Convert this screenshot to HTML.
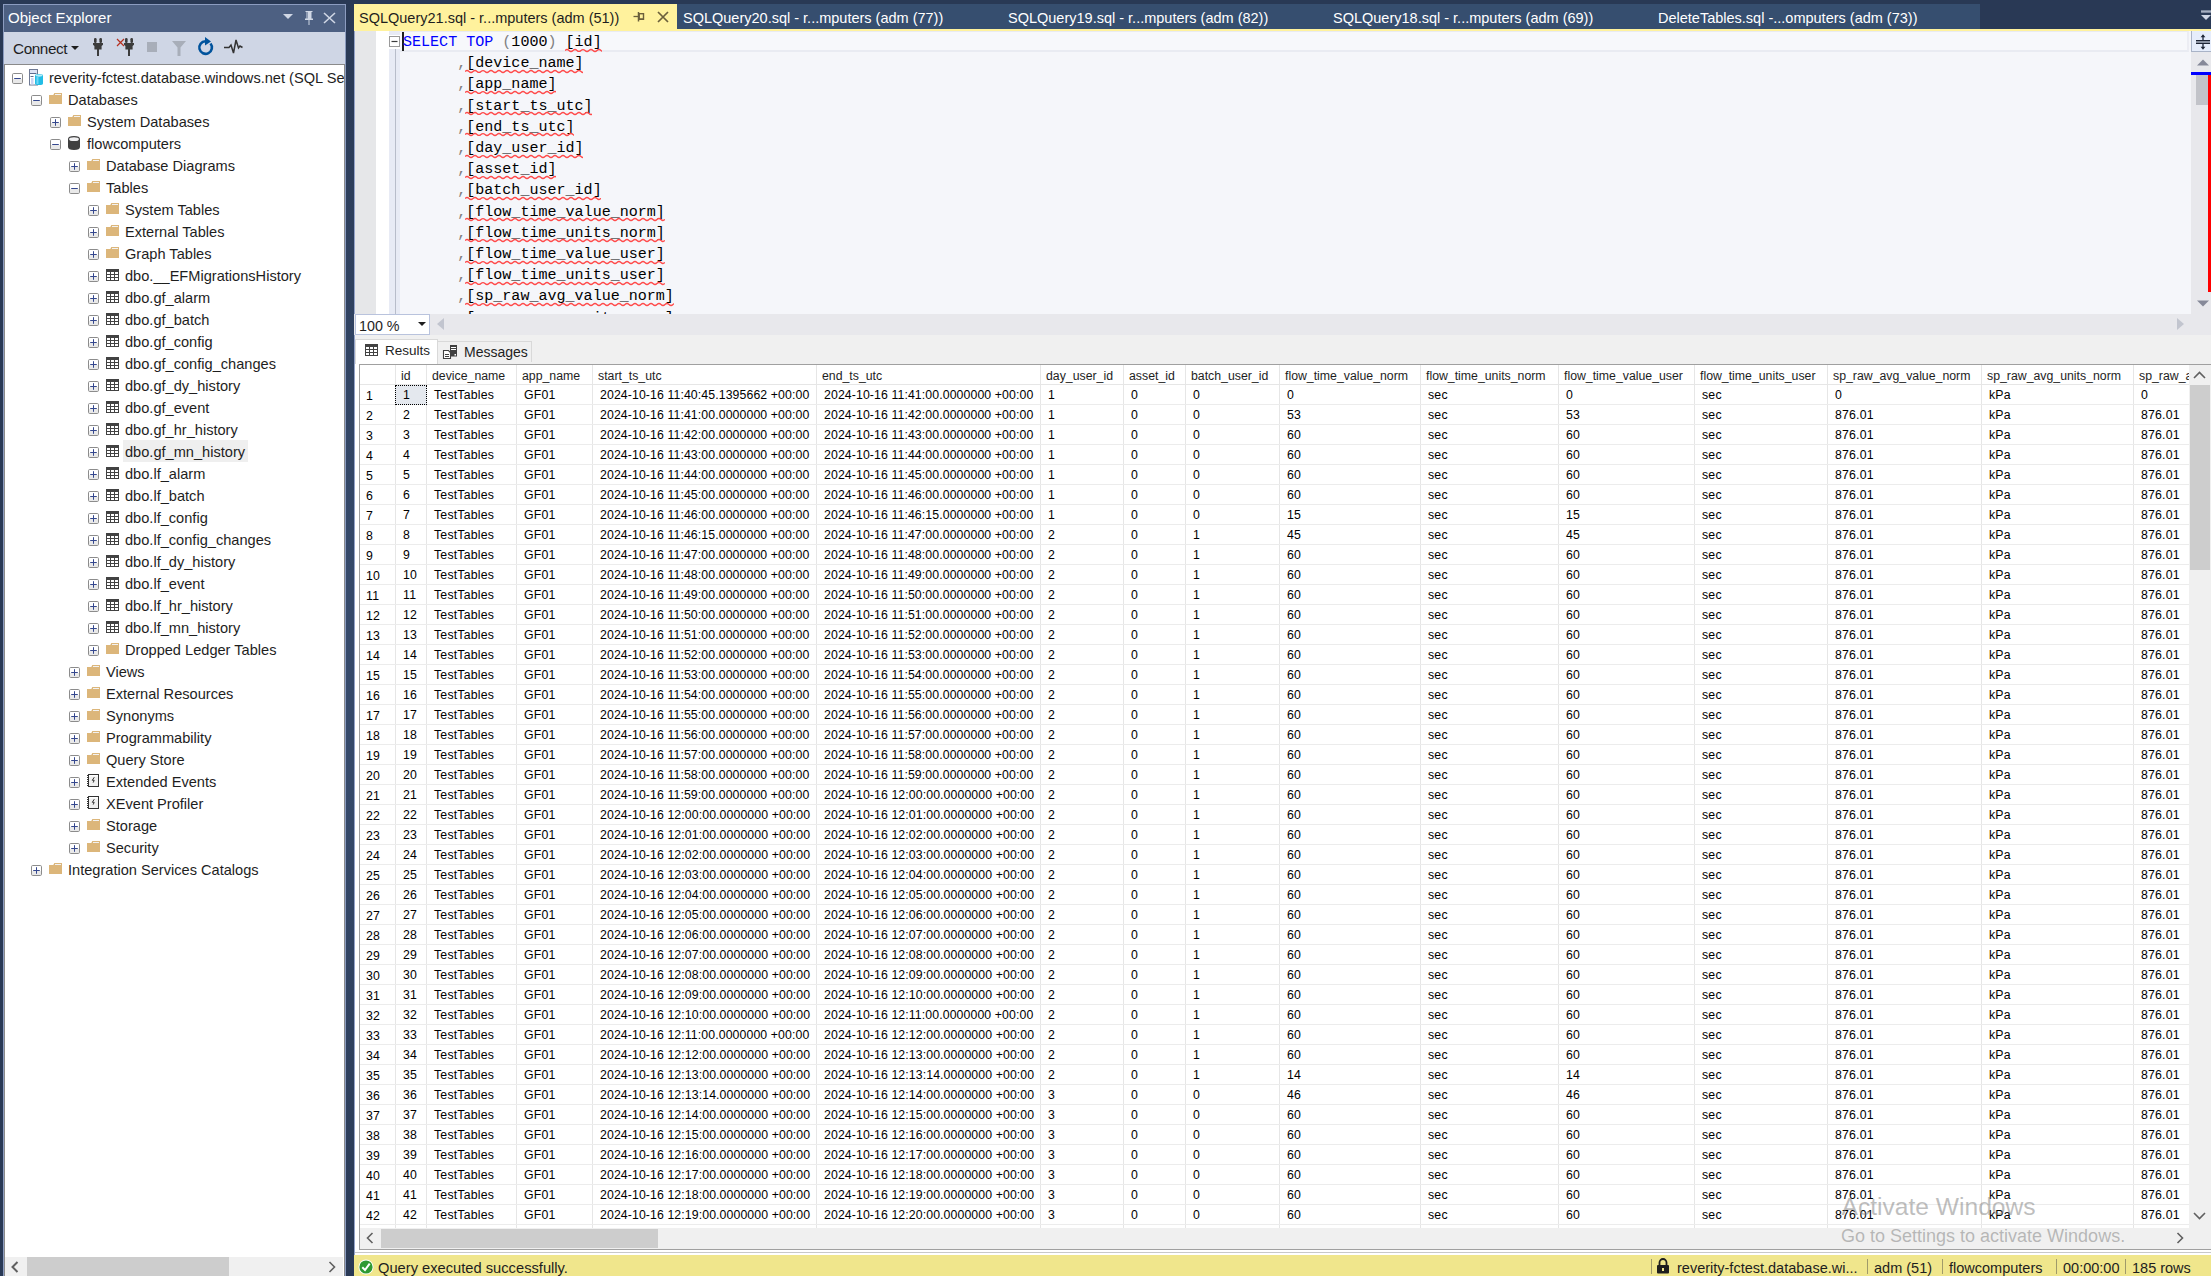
<!DOCTYPE html><html><head><meta charset="utf-8"><style>
*{margin:0;padding:0;box-sizing:border-box}
html,body{width:2211px;height:1276px;overflow:hidden}
body{background:#293955;position:relative;font-family:"Liberation Sans",sans-serif;color:#000}
.a{position:absolute}
.t{position:absolute;white-space:pre;line-height:1}
</style></head><body><div class="a" style="left:344px;top:0px;width:12px;height:1276px;background:linear-gradient(to bottom,#293955 0%,#35496a 45%,#35496a 62%,#293955 100%);"></div>
<div class="a" style="left:3px;top:4px;width:343px;height:1272px;background:#8c9cc0;"></div>
<div class="a" style="left:4px;top:5px;width:341px;height:27px;background:#4d6082;"></div>
<div class="t" style="left:8px;top:10px;font-size:15px;color:#ffffff;font-family:'Liberation Sans';">Object Explorer</div>
<svg class="a" style="left:282px;top:13px" width="12" height="8"><path d="M1 1 L11 1 L6 6 Z" fill="#d0d7e5"/></svg>
<svg class="a" style="left:303px;top:10px" width="12" height="16"><path d="M2.5 1 H9.5 V2 H8.5 V8.5 H10 V10 H6.5 V15 H5.5 V10 H2 V8.5 H3.5 V2 H2.5 Z M4.5 2 V8.5 H5 V2 Z" fill="#d0d7e5"/></svg>
<svg class="a" style="left:323px;top:12px" width="13" height="12"><path d="M1 1 L12 11 M12 1 L1 11" stroke="#d0d7e5" stroke-width="1.6"/></svg>
<div class="a" style="left:4px;top:32px;width:341px;height:32px;background:#cfd6e5;"></div>
<div class="t" style="left:13px;top:40.5px;font-size:15.3px;color:#1e1e1e;font-family:'Liberation Sans';letter-spacing:-0.4px">Connect</div>
<svg class="a" style="left:71px;top:46px" width="9" height="5"><path d="M0 0 L8 0 L4 4 Z" fill="#1e1e1e"/></svg>
<svg class="a" style="left:93px;top:38px" width="10" height="18"><rect x="1" y="0" width="2.6" height="5" rx="1.2" fill="#3c3c3c"/><rect x="6.4" y="0" width="2.6" height="5" rx="1.2" fill="#3c3c3c"/><path d="M0 5 H10 V6.8 L8.6 8 V11.5 H6 V18 H4 V11.5 H1.4 V8 L0 6.8 Z" fill="#3c3c3c"/></svg>
<svg class="a" style="left:116px;top:38px" width="9" height="9"><path d="M1 1 L8 8 M8 1 L1 8" stroke="#b5301f" stroke-width="1.2"/></svg>
<svg class="a" style="left:124px;top:38px" width="10" height="18"><rect x="1" y="0" width="2.6" height="5" rx="1.2" fill="#3c3c3c"/><rect x="6.4" y="0" width="2.6" height="5" rx="1.2" fill="#3c3c3c"/><path d="M0 5 H10 V6.8 L8.6 8 V11.5 H6 V18 H4 V11.5 H1.4 V8 L0 6.8 Z" fill="#3c3c3c"/></svg>
<div class="a" style="left:147px;top:42px;width:10px;height:10px;background:#a8aeb9;"></div>
<svg class="a" style="left:172px;top:41px" width="15" height="16"><path d="M0 0 H14 L8.5 6.5 V15 H5.5 V6.5 Z" fill="#a8aeb9"/></svg>
<svg class="a" style="left:197px;top:37px" width="18" height="20"><path d="M13.5 6.5 A6.3 6.3 0 1 1 8.5 4.2" stroke="#00539c" stroke-width="2.6" fill="none"/><path d="M8 0 L14 4.5 L8 8.5 Z" fill="#00539c"/></svg>
<svg class="a" style="left:224px;top:39px" width="19" height="16"><path d="M0 8.5 H5 L7 6 L9.5 14 L12 1 L14.5 9 L16 7 L18.5 8.5" stroke="#333" stroke-width="1.5" fill="none"/></svg>
<div class="a" style="left:4px;top:64px;width:341px;height:1212px;background:#ffffff;border:1px solid #8a8a8a;border-bottom:none"></div>
<div class="a" style="left:5px;top:1257px;width:338px;height:19px;background:#f0f0f0;"></div>
<div class="a" style="left:27px;top:1257px;width:202px;height:19px;background:#cdcdcd;"></div>
<svg class="a" style="left:11px;top:1261px" width="8" height="12"><path d="M6.5 1 L1.5 6 L6.5 11" stroke="#606060" stroke-width="2" fill="none"/></svg>
<svg class="a" style="left:328px;top:1261px" width="8" height="12"><path d="M1.5 1 L6.5 6 L1.5 11" stroke="#606060" stroke-width="1.6" fill="none"/></svg>
<div class="a" style="left:5px;top:65px;width:339px;height:1192px;overflow:hidden">
<svg class="a" style="left:7px;top:8px" width="11" height="11"><rect x="1" y="6" width="9" height="4" fill="#e9e9e9"/><rect x="0.5" y="0.5" width="10" height="10" rx="1.2" fill="none" stroke="#8c8c8c"/><path d="M2.2 5.5 H8.8" stroke="#34478e" stroke-width="1"/></svg>
<svg class="a" style="left:24px;top:4px" width="15" height="17"><rect x="0.5" y="0.5" width="8" height="15.5" fill="#fff" stroke="#6f7a94"/><rect x="1" y="1" width="7" height="3" fill="#dfe4f5"/><path d="M1 4.5 H7.5 M1.5 7.5 H4.5" stroke="#5d6b8f" stroke-width="1.2"/><rect x="2" y="9" width="2.5" height="6.5" fill="#cdd5f2"/><path d="M6 6.5 Q6 5 10 5 Q14 5 14 6.5 V14.5 Q14 16 10 16 Q6 16 6 14.5 Z" fill="#22bde6"/><ellipse cx="10" cy="6.6" rx="3.4" ry="1.1" fill="#b5ecfa"/><rect x="7.5" y="8" width="2" height="7" fill="#6fd6f5"/></svg>
<div class="t" style="left:44px;top:6px;font-size:14.6px;color:#1e1e1e;font-family:'Liberation Sans';">reverity-fctest.database.windows.net (SQL Se</div>
<svg class="a" style="left:26px;top:30px" width="11" height="11"><rect x="1" y="6" width="9" height="4" fill="#e9e9e9"/><rect x="0.5" y="0.5" width="10" height="10" rx="1.2" fill="none" stroke="#8c8c8c"/><path d="M2.2 5.5 H8.8" stroke="#34478e" stroke-width="1"/></svg>
<svg class="a" style="left:44px;top:28px" width="14" height="11"><path d="M0 2 H4.3 L5.3 0 H13 V11 H0 Z" fill="#dcb67a"/><path d="M6 1.5 H12" stroke="#f2f2f2" stroke-width="1"/></svg>
<div class="t" style="left:63px;top:28px;font-size:14.6px;color:#1e1e1e;font-family:'Liberation Sans';">Databases</div>
<svg class="a" style="left:45px;top:52px" width="11" height="11"><rect x="1" y="6" width="9" height="4" fill="#e9e9e9"/><rect x="0.5" y="0.5" width="10" height="10" rx="1.2" fill="none" stroke="#8c8c8c"/><path d="M2.2 5.5 H8.8" stroke="#34478e" stroke-width="1"/><path d="M5.5 2.2 V8.8" stroke="#34478e" stroke-width="1"/></svg>
<svg class="a" style="left:63px;top:50px" width="14" height="11"><path d="M0 2 H4.3 L5.3 0 H13 V11 H0 Z" fill="#dcb67a"/><path d="M6 1.5 H12" stroke="#f2f2f2" stroke-width="1"/></svg>
<div class="t" style="left:82px;top:50px;font-size:14.6px;color:#1e1e1e;font-family:'Liberation Sans';">System Databases</div>
<svg class="a" style="left:45px;top:74px" width="11" height="11"><rect x="1" y="6" width="9" height="4" fill="#e9e9e9"/><rect x="0.5" y="0.5" width="10" height="10" rx="1.2" fill="none" stroke="#8c8c8c"/><path d="M2.2 5.5 H8.8" stroke="#34478e" stroke-width="1"/></svg>
<svg class="a" style="left:63px;top:71px" width="12" height="14"><path d="M0 3 Q0 0 6 0 Q12 0 12 3 V11 Q12 14 6 14 Q0 14 0 11 Z" fill="#404040"/><ellipse cx="6" cy="3.2" rx="4.9" ry="1.9" fill="#f0f0f2"/></svg>
<div class="t" style="left:82px;top:72px;font-size:14.6px;color:#1e1e1e;font-family:'Liberation Sans';">flowcomputers</div>
<svg class="a" style="left:64px;top:96px" width="11" height="11"><rect x="1" y="6" width="9" height="4" fill="#e9e9e9"/><rect x="0.5" y="0.5" width="10" height="10" rx="1.2" fill="none" stroke="#8c8c8c"/><path d="M2.2 5.5 H8.8" stroke="#34478e" stroke-width="1"/><path d="M5.5 2.2 V8.8" stroke="#34478e" stroke-width="1"/></svg>
<svg class="a" style="left:82px;top:94px" width="14" height="11"><path d="M0 2 H4.3 L5.3 0 H13 V11 H0 Z" fill="#dcb67a"/><path d="M6 1.5 H12" stroke="#f2f2f2" stroke-width="1"/></svg>
<div class="t" style="left:101px;top:94px;font-size:14.6px;color:#1e1e1e;font-family:'Liberation Sans';">Database Diagrams</div>
<svg class="a" style="left:64px;top:118px" width="11" height="11"><rect x="1" y="6" width="9" height="4" fill="#e9e9e9"/><rect x="0.5" y="0.5" width="10" height="10" rx="1.2" fill="none" stroke="#8c8c8c"/><path d="M2.2 5.5 H8.8" stroke="#34478e" stroke-width="1"/></svg>
<svg class="a" style="left:82px;top:116px" width="14" height="11"><path d="M0 2 H4.3 L5.3 0 H13 V11 H0 Z" fill="#dcb67a"/><path d="M6 1.5 H12" stroke="#f2f2f2" stroke-width="1"/></svg>
<div class="t" style="left:101px;top:116px;font-size:14.6px;color:#1e1e1e;font-family:'Liberation Sans';">Tables</div>
<svg class="a" style="left:83px;top:140px" width="11" height="11"><rect x="1" y="6" width="9" height="4" fill="#e9e9e9"/><rect x="0.5" y="0.5" width="10" height="10" rx="1.2" fill="none" stroke="#8c8c8c"/><path d="M2.2 5.5 H8.8" stroke="#34478e" stroke-width="1"/><path d="M5.5 2.2 V8.8" stroke="#34478e" stroke-width="1"/></svg>
<svg class="a" style="left:101px;top:138px" width="14" height="11"><path d="M0 2 H4.3 L5.3 0 H13 V11 H0 Z" fill="#dcb67a"/><path d="M6 1.5 H12" stroke="#f2f2f2" stroke-width="1"/></svg>
<div class="t" style="left:120px;top:138px;font-size:14.6px;color:#1e1e1e;font-family:'Liberation Sans';">System Tables</div>
<svg class="a" style="left:83px;top:162px" width="11" height="11"><rect x="1" y="6" width="9" height="4" fill="#e9e9e9"/><rect x="0.5" y="0.5" width="10" height="10" rx="1.2" fill="none" stroke="#8c8c8c"/><path d="M2.2 5.5 H8.8" stroke="#34478e" stroke-width="1"/><path d="M5.5 2.2 V8.8" stroke="#34478e" stroke-width="1"/></svg>
<svg class="a" style="left:101px;top:160px" width="14" height="11"><path d="M0 2 H4.3 L5.3 0 H13 V11 H0 Z" fill="#dcb67a"/><path d="M6 1.5 H12" stroke="#f2f2f2" stroke-width="1"/></svg>
<div class="t" style="left:120px;top:160px;font-size:14.6px;color:#1e1e1e;font-family:'Liberation Sans';">External Tables</div>
<svg class="a" style="left:83px;top:184px" width="11" height="11"><rect x="1" y="6" width="9" height="4" fill="#e9e9e9"/><rect x="0.5" y="0.5" width="10" height="10" rx="1.2" fill="none" stroke="#8c8c8c"/><path d="M2.2 5.5 H8.8" stroke="#34478e" stroke-width="1"/><path d="M5.5 2.2 V8.8" stroke="#34478e" stroke-width="1"/></svg>
<svg class="a" style="left:101px;top:182px" width="14" height="11"><path d="M0 2 H4.3 L5.3 0 H13 V11 H0 Z" fill="#dcb67a"/><path d="M6 1.5 H12" stroke="#f2f2f2" stroke-width="1"/></svg>
<div class="t" style="left:120px;top:182px;font-size:14.6px;color:#1e1e1e;font-family:'Liberation Sans';">Graph Tables</div>
<svg class="a" style="left:83px;top:206px" width="11" height="11"><rect x="1" y="6" width="9" height="4" fill="#e9e9e9"/><rect x="0.5" y="0.5" width="10" height="10" rx="1.2" fill="none" stroke="#8c8c8c"/><path d="M2.2 5.5 H8.8" stroke="#34478e" stroke-width="1"/><path d="M5.5 2.2 V8.8" stroke="#34478e" stroke-width="1"/></svg>
<svg class="a" style="left:101px;top:204px" width="13" height="12"><rect width="13" height="12" fill="#424242"/><g fill="#fff"><rect x="1" y="3" width="3" height="2"/><rect x="5" y="3" width="3" height="2"/><rect x="9" y="3" width="3" height="2"/><rect x="1" y="6" width="3" height="2"/><rect x="5" y="6" width="3" height="2"/><rect x="9" y="6" width="3" height="2"/><rect x="1" y="9" width="3" height="2"/><rect x="5" y="9" width="3" height="2"/><rect x="9" y="9" width="3" height="2"/></g></svg>
<div class="t" style="left:120px;top:204px;font-size:14.6px;color:#1e1e1e;font-family:'Liberation Sans';">dbo.__EFMigrationsHistory</div>
<svg class="a" style="left:83px;top:228px" width="11" height="11"><rect x="1" y="6" width="9" height="4" fill="#e9e9e9"/><rect x="0.5" y="0.5" width="10" height="10" rx="1.2" fill="none" stroke="#8c8c8c"/><path d="M2.2 5.5 H8.8" stroke="#34478e" stroke-width="1"/><path d="M5.5 2.2 V8.8" stroke="#34478e" stroke-width="1"/></svg>
<svg class="a" style="left:101px;top:226px" width="13" height="12"><rect width="13" height="12" fill="#424242"/><g fill="#fff"><rect x="1" y="3" width="3" height="2"/><rect x="5" y="3" width="3" height="2"/><rect x="9" y="3" width="3" height="2"/><rect x="1" y="6" width="3" height="2"/><rect x="5" y="6" width="3" height="2"/><rect x="9" y="6" width="3" height="2"/><rect x="1" y="9" width="3" height="2"/><rect x="5" y="9" width="3" height="2"/><rect x="9" y="9" width="3" height="2"/></g></svg>
<div class="t" style="left:120px;top:226px;font-size:14.6px;color:#1e1e1e;font-family:'Liberation Sans';">dbo.gf_alarm</div>
<svg class="a" style="left:83px;top:250px" width="11" height="11"><rect x="1" y="6" width="9" height="4" fill="#e9e9e9"/><rect x="0.5" y="0.5" width="10" height="10" rx="1.2" fill="none" stroke="#8c8c8c"/><path d="M2.2 5.5 H8.8" stroke="#34478e" stroke-width="1"/><path d="M5.5 2.2 V8.8" stroke="#34478e" stroke-width="1"/></svg>
<svg class="a" style="left:101px;top:248px" width="13" height="12"><rect width="13" height="12" fill="#424242"/><g fill="#fff"><rect x="1" y="3" width="3" height="2"/><rect x="5" y="3" width="3" height="2"/><rect x="9" y="3" width="3" height="2"/><rect x="1" y="6" width="3" height="2"/><rect x="5" y="6" width="3" height="2"/><rect x="9" y="6" width="3" height="2"/><rect x="1" y="9" width="3" height="2"/><rect x="5" y="9" width="3" height="2"/><rect x="9" y="9" width="3" height="2"/></g></svg>
<div class="t" style="left:120px;top:248px;font-size:14.6px;color:#1e1e1e;font-family:'Liberation Sans';">dbo.gf_batch</div>
<svg class="a" style="left:83px;top:272px" width="11" height="11"><rect x="1" y="6" width="9" height="4" fill="#e9e9e9"/><rect x="0.5" y="0.5" width="10" height="10" rx="1.2" fill="none" stroke="#8c8c8c"/><path d="M2.2 5.5 H8.8" stroke="#34478e" stroke-width="1"/><path d="M5.5 2.2 V8.8" stroke="#34478e" stroke-width="1"/></svg>
<svg class="a" style="left:101px;top:270px" width="13" height="12"><rect width="13" height="12" fill="#424242"/><g fill="#fff"><rect x="1" y="3" width="3" height="2"/><rect x="5" y="3" width="3" height="2"/><rect x="9" y="3" width="3" height="2"/><rect x="1" y="6" width="3" height="2"/><rect x="5" y="6" width="3" height="2"/><rect x="9" y="6" width="3" height="2"/><rect x="1" y="9" width="3" height="2"/><rect x="5" y="9" width="3" height="2"/><rect x="9" y="9" width="3" height="2"/></g></svg>
<div class="t" style="left:120px;top:270px;font-size:14.6px;color:#1e1e1e;font-family:'Liberation Sans';">dbo.gf_config</div>
<svg class="a" style="left:83px;top:294px" width="11" height="11"><rect x="1" y="6" width="9" height="4" fill="#e9e9e9"/><rect x="0.5" y="0.5" width="10" height="10" rx="1.2" fill="none" stroke="#8c8c8c"/><path d="M2.2 5.5 H8.8" stroke="#34478e" stroke-width="1"/><path d="M5.5 2.2 V8.8" stroke="#34478e" stroke-width="1"/></svg>
<svg class="a" style="left:101px;top:292px" width="13" height="12"><rect width="13" height="12" fill="#424242"/><g fill="#fff"><rect x="1" y="3" width="3" height="2"/><rect x="5" y="3" width="3" height="2"/><rect x="9" y="3" width="3" height="2"/><rect x="1" y="6" width="3" height="2"/><rect x="5" y="6" width="3" height="2"/><rect x="9" y="6" width="3" height="2"/><rect x="1" y="9" width="3" height="2"/><rect x="5" y="9" width="3" height="2"/><rect x="9" y="9" width="3" height="2"/></g></svg>
<div class="t" style="left:120px;top:292px;font-size:14.6px;color:#1e1e1e;font-family:'Liberation Sans';">dbo.gf_config_changes</div>
<svg class="a" style="left:83px;top:316px" width="11" height="11"><rect x="1" y="6" width="9" height="4" fill="#e9e9e9"/><rect x="0.5" y="0.5" width="10" height="10" rx="1.2" fill="none" stroke="#8c8c8c"/><path d="M2.2 5.5 H8.8" stroke="#34478e" stroke-width="1"/><path d="M5.5 2.2 V8.8" stroke="#34478e" stroke-width="1"/></svg>
<svg class="a" style="left:101px;top:314px" width="13" height="12"><rect width="13" height="12" fill="#424242"/><g fill="#fff"><rect x="1" y="3" width="3" height="2"/><rect x="5" y="3" width="3" height="2"/><rect x="9" y="3" width="3" height="2"/><rect x="1" y="6" width="3" height="2"/><rect x="5" y="6" width="3" height="2"/><rect x="9" y="6" width="3" height="2"/><rect x="1" y="9" width="3" height="2"/><rect x="5" y="9" width="3" height="2"/><rect x="9" y="9" width="3" height="2"/></g></svg>
<div class="t" style="left:120px;top:314px;font-size:14.6px;color:#1e1e1e;font-family:'Liberation Sans';">dbo.gf_dy_history</div>
<svg class="a" style="left:83px;top:338px" width="11" height="11"><rect x="1" y="6" width="9" height="4" fill="#e9e9e9"/><rect x="0.5" y="0.5" width="10" height="10" rx="1.2" fill="none" stroke="#8c8c8c"/><path d="M2.2 5.5 H8.8" stroke="#34478e" stroke-width="1"/><path d="M5.5 2.2 V8.8" stroke="#34478e" stroke-width="1"/></svg>
<svg class="a" style="left:101px;top:336px" width="13" height="12"><rect width="13" height="12" fill="#424242"/><g fill="#fff"><rect x="1" y="3" width="3" height="2"/><rect x="5" y="3" width="3" height="2"/><rect x="9" y="3" width="3" height="2"/><rect x="1" y="6" width="3" height="2"/><rect x="5" y="6" width="3" height="2"/><rect x="9" y="6" width="3" height="2"/><rect x="1" y="9" width="3" height="2"/><rect x="5" y="9" width="3" height="2"/><rect x="9" y="9" width="3" height="2"/></g></svg>
<div class="t" style="left:120px;top:336px;font-size:14.6px;color:#1e1e1e;font-family:'Liberation Sans';">dbo.gf_event</div>
<svg class="a" style="left:83px;top:360px" width="11" height="11"><rect x="1" y="6" width="9" height="4" fill="#e9e9e9"/><rect x="0.5" y="0.5" width="10" height="10" rx="1.2" fill="none" stroke="#8c8c8c"/><path d="M2.2 5.5 H8.8" stroke="#34478e" stroke-width="1"/><path d="M5.5 2.2 V8.8" stroke="#34478e" stroke-width="1"/></svg>
<svg class="a" style="left:101px;top:358px" width="13" height="12"><rect width="13" height="12" fill="#424242"/><g fill="#fff"><rect x="1" y="3" width="3" height="2"/><rect x="5" y="3" width="3" height="2"/><rect x="9" y="3" width="3" height="2"/><rect x="1" y="6" width="3" height="2"/><rect x="5" y="6" width="3" height="2"/><rect x="9" y="6" width="3" height="2"/><rect x="1" y="9" width="3" height="2"/><rect x="5" y="9" width="3" height="2"/><rect x="9" y="9" width="3" height="2"/></g></svg>
<div class="t" style="left:120px;top:358px;font-size:14.6px;color:#1e1e1e;font-family:'Liberation Sans';">dbo.gf_hr_history</div>
<svg class="a" style="left:83px;top:382px" width="11" height="11"><rect x="1" y="6" width="9" height="4" fill="#e9e9e9"/><rect x="0.5" y="0.5" width="10" height="10" rx="1.2" fill="none" stroke="#8c8c8c"/><path d="M2.2 5.5 H8.8" stroke="#34478e" stroke-width="1"/><path d="M5.5 2.2 V8.8" stroke="#34478e" stroke-width="1"/></svg>
<svg class="a" style="left:101px;top:380px" width="13" height="12"><rect width="13" height="12" fill="#424242"/><g fill="#fff"><rect x="1" y="3" width="3" height="2"/><rect x="5" y="3" width="3" height="2"/><rect x="9" y="3" width="3" height="2"/><rect x="1" y="6" width="3" height="2"/><rect x="5" y="6" width="3" height="2"/><rect x="9" y="6" width="3" height="2"/><rect x="1" y="9" width="3" height="2"/><rect x="5" y="9" width="3" height="2"/><rect x="9" y="9" width="3" height="2"/></g></svg>
<div class="a" style="left:118px;top:375px;width:125px;height:22px;background:#efefef;"></div>
<div class="t" style="left:120px;top:380px;font-size:14.6px;color:#1e1e1e;font-family:'Liberation Sans';">dbo.gf_mn_history</div>
<svg class="a" style="left:83px;top:404px" width="11" height="11"><rect x="1" y="6" width="9" height="4" fill="#e9e9e9"/><rect x="0.5" y="0.5" width="10" height="10" rx="1.2" fill="none" stroke="#8c8c8c"/><path d="M2.2 5.5 H8.8" stroke="#34478e" stroke-width="1"/><path d="M5.5 2.2 V8.8" stroke="#34478e" stroke-width="1"/></svg>
<svg class="a" style="left:101px;top:402px" width="13" height="12"><rect width="13" height="12" fill="#424242"/><g fill="#fff"><rect x="1" y="3" width="3" height="2"/><rect x="5" y="3" width="3" height="2"/><rect x="9" y="3" width="3" height="2"/><rect x="1" y="6" width="3" height="2"/><rect x="5" y="6" width="3" height="2"/><rect x="9" y="6" width="3" height="2"/><rect x="1" y="9" width="3" height="2"/><rect x="5" y="9" width="3" height="2"/><rect x="9" y="9" width="3" height="2"/></g></svg>
<div class="t" style="left:120px;top:402px;font-size:14.6px;color:#1e1e1e;font-family:'Liberation Sans';">dbo.lf_alarm</div>
<svg class="a" style="left:83px;top:426px" width="11" height="11"><rect x="1" y="6" width="9" height="4" fill="#e9e9e9"/><rect x="0.5" y="0.5" width="10" height="10" rx="1.2" fill="none" stroke="#8c8c8c"/><path d="M2.2 5.5 H8.8" stroke="#34478e" stroke-width="1"/><path d="M5.5 2.2 V8.8" stroke="#34478e" stroke-width="1"/></svg>
<svg class="a" style="left:101px;top:424px" width="13" height="12"><rect width="13" height="12" fill="#424242"/><g fill="#fff"><rect x="1" y="3" width="3" height="2"/><rect x="5" y="3" width="3" height="2"/><rect x="9" y="3" width="3" height="2"/><rect x="1" y="6" width="3" height="2"/><rect x="5" y="6" width="3" height="2"/><rect x="9" y="6" width="3" height="2"/><rect x="1" y="9" width="3" height="2"/><rect x="5" y="9" width="3" height="2"/><rect x="9" y="9" width="3" height="2"/></g></svg>
<div class="t" style="left:120px;top:424px;font-size:14.6px;color:#1e1e1e;font-family:'Liberation Sans';">dbo.lf_batch</div>
<svg class="a" style="left:83px;top:448px" width="11" height="11"><rect x="1" y="6" width="9" height="4" fill="#e9e9e9"/><rect x="0.5" y="0.5" width="10" height="10" rx="1.2" fill="none" stroke="#8c8c8c"/><path d="M2.2 5.5 H8.8" stroke="#34478e" stroke-width="1"/><path d="M5.5 2.2 V8.8" stroke="#34478e" stroke-width="1"/></svg>
<svg class="a" style="left:101px;top:446px" width="13" height="12"><rect width="13" height="12" fill="#424242"/><g fill="#fff"><rect x="1" y="3" width="3" height="2"/><rect x="5" y="3" width="3" height="2"/><rect x="9" y="3" width="3" height="2"/><rect x="1" y="6" width="3" height="2"/><rect x="5" y="6" width="3" height="2"/><rect x="9" y="6" width="3" height="2"/><rect x="1" y="9" width="3" height="2"/><rect x="5" y="9" width="3" height="2"/><rect x="9" y="9" width="3" height="2"/></g></svg>
<div class="t" style="left:120px;top:446px;font-size:14.6px;color:#1e1e1e;font-family:'Liberation Sans';">dbo.lf_config</div>
<svg class="a" style="left:83px;top:470px" width="11" height="11"><rect x="1" y="6" width="9" height="4" fill="#e9e9e9"/><rect x="0.5" y="0.5" width="10" height="10" rx="1.2" fill="none" stroke="#8c8c8c"/><path d="M2.2 5.5 H8.8" stroke="#34478e" stroke-width="1"/><path d="M5.5 2.2 V8.8" stroke="#34478e" stroke-width="1"/></svg>
<svg class="a" style="left:101px;top:468px" width="13" height="12"><rect width="13" height="12" fill="#424242"/><g fill="#fff"><rect x="1" y="3" width="3" height="2"/><rect x="5" y="3" width="3" height="2"/><rect x="9" y="3" width="3" height="2"/><rect x="1" y="6" width="3" height="2"/><rect x="5" y="6" width="3" height="2"/><rect x="9" y="6" width="3" height="2"/><rect x="1" y="9" width="3" height="2"/><rect x="5" y="9" width="3" height="2"/><rect x="9" y="9" width="3" height="2"/></g></svg>
<div class="t" style="left:120px;top:468px;font-size:14.6px;color:#1e1e1e;font-family:'Liberation Sans';">dbo.lf_config_changes</div>
<svg class="a" style="left:83px;top:492px" width="11" height="11"><rect x="1" y="6" width="9" height="4" fill="#e9e9e9"/><rect x="0.5" y="0.5" width="10" height="10" rx="1.2" fill="none" stroke="#8c8c8c"/><path d="M2.2 5.5 H8.8" stroke="#34478e" stroke-width="1"/><path d="M5.5 2.2 V8.8" stroke="#34478e" stroke-width="1"/></svg>
<svg class="a" style="left:101px;top:490px" width="13" height="12"><rect width="13" height="12" fill="#424242"/><g fill="#fff"><rect x="1" y="3" width="3" height="2"/><rect x="5" y="3" width="3" height="2"/><rect x="9" y="3" width="3" height="2"/><rect x="1" y="6" width="3" height="2"/><rect x="5" y="6" width="3" height="2"/><rect x="9" y="6" width="3" height="2"/><rect x="1" y="9" width="3" height="2"/><rect x="5" y="9" width="3" height="2"/><rect x="9" y="9" width="3" height="2"/></g></svg>
<div class="t" style="left:120px;top:490px;font-size:14.6px;color:#1e1e1e;font-family:'Liberation Sans';">dbo.lf_dy_history</div>
<svg class="a" style="left:83px;top:514px" width="11" height="11"><rect x="1" y="6" width="9" height="4" fill="#e9e9e9"/><rect x="0.5" y="0.5" width="10" height="10" rx="1.2" fill="none" stroke="#8c8c8c"/><path d="M2.2 5.5 H8.8" stroke="#34478e" stroke-width="1"/><path d="M5.5 2.2 V8.8" stroke="#34478e" stroke-width="1"/></svg>
<svg class="a" style="left:101px;top:512px" width="13" height="12"><rect width="13" height="12" fill="#424242"/><g fill="#fff"><rect x="1" y="3" width="3" height="2"/><rect x="5" y="3" width="3" height="2"/><rect x="9" y="3" width="3" height="2"/><rect x="1" y="6" width="3" height="2"/><rect x="5" y="6" width="3" height="2"/><rect x="9" y="6" width="3" height="2"/><rect x="1" y="9" width="3" height="2"/><rect x="5" y="9" width="3" height="2"/><rect x="9" y="9" width="3" height="2"/></g></svg>
<div class="t" style="left:120px;top:512px;font-size:14.6px;color:#1e1e1e;font-family:'Liberation Sans';">dbo.lf_event</div>
<svg class="a" style="left:83px;top:536px" width="11" height="11"><rect x="1" y="6" width="9" height="4" fill="#e9e9e9"/><rect x="0.5" y="0.5" width="10" height="10" rx="1.2" fill="none" stroke="#8c8c8c"/><path d="M2.2 5.5 H8.8" stroke="#34478e" stroke-width="1"/><path d="M5.5 2.2 V8.8" stroke="#34478e" stroke-width="1"/></svg>
<svg class="a" style="left:101px;top:534px" width="13" height="12"><rect width="13" height="12" fill="#424242"/><g fill="#fff"><rect x="1" y="3" width="3" height="2"/><rect x="5" y="3" width="3" height="2"/><rect x="9" y="3" width="3" height="2"/><rect x="1" y="6" width="3" height="2"/><rect x="5" y="6" width="3" height="2"/><rect x="9" y="6" width="3" height="2"/><rect x="1" y="9" width="3" height="2"/><rect x="5" y="9" width="3" height="2"/><rect x="9" y="9" width="3" height="2"/></g></svg>
<div class="t" style="left:120px;top:534px;font-size:14.6px;color:#1e1e1e;font-family:'Liberation Sans';">dbo.lf_hr_history</div>
<svg class="a" style="left:83px;top:558px" width="11" height="11"><rect x="1" y="6" width="9" height="4" fill="#e9e9e9"/><rect x="0.5" y="0.5" width="10" height="10" rx="1.2" fill="none" stroke="#8c8c8c"/><path d="M2.2 5.5 H8.8" stroke="#34478e" stroke-width="1"/><path d="M5.5 2.2 V8.8" stroke="#34478e" stroke-width="1"/></svg>
<svg class="a" style="left:101px;top:556px" width="13" height="12"><rect width="13" height="12" fill="#424242"/><g fill="#fff"><rect x="1" y="3" width="3" height="2"/><rect x="5" y="3" width="3" height="2"/><rect x="9" y="3" width="3" height="2"/><rect x="1" y="6" width="3" height="2"/><rect x="5" y="6" width="3" height="2"/><rect x="9" y="6" width="3" height="2"/><rect x="1" y="9" width="3" height="2"/><rect x="5" y="9" width="3" height="2"/><rect x="9" y="9" width="3" height="2"/></g></svg>
<div class="t" style="left:120px;top:556px;font-size:14.6px;color:#1e1e1e;font-family:'Liberation Sans';">dbo.lf_mn_history</div>
<svg class="a" style="left:83px;top:580px" width="11" height="11"><rect x="1" y="6" width="9" height="4" fill="#e9e9e9"/><rect x="0.5" y="0.5" width="10" height="10" rx="1.2" fill="none" stroke="#8c8c8c"/><path d="M2.2 5.5 H8.8" stroke="#34478e" stroke-width="1"/><path d="M5.5 2.2 V8.8" stroke="#34478e" stroke-width="1"/></svg>
<svg class="a" style="left:101px;top:578px" width="14" height="11"><path d="M0 2 H4.3 L5.3 0 H13 V11 H0 Z" fill="#dcb67a"/><path d="M6 1.5 H12" stroke="#f2f2f2" stroke-width="1"/></svg>
<div class="t" style="left:120px;top:578px;font-size:14.6px;color:#1e1e1e;font-family:'Liberation Sans';">Dropped Ledger Tables</div>
<svg class="a" style="left:64px;top:602px" width="11" height="11"><rect x="1" y="6" width="9" height="4" fill="#e9e9e9"/><rect x="0.5" y="0.5" width="10" height="10" rx="1.2" fill="none" stroke="#8c8c8c"/><path d="M2.2 5.5 H8.8" stroke="#34478e" stroke-width="1"/><path d="M5.5 2.2 V8.8" stroke="#34478e" stroke-width="1"/></svg>
<svg class="a" style="left:82px;top:600px" width="14" height="11"><path d="M0 2 H4.3 L5.3 0 H13 V11 H0 Z" fill="#dcb67a"/><path d="M6 1.5 H12" stroke="#f2f2f2" stroke-width="1"/></svg>
<div class="t" style="left:101px;top:600px;font-size:14.6px;color:#1e1e1e;font-family:'Liberation Sans';">Views</div>
<svg class="a" style="left:64px;top:624px" width="11" height="11"><rect x="1" y="6" width="9" height="4" fill="#e9e9e9"/><rect x="0.5" y="0.5" width="10" height="10" rx="1.2" fill="none" stroke="#8c8c8c"/><path d="M2.2 5.5 H8.8" stroke="#34478e" stroke-width="1"/><path d="M5.5 2.2 V8.8" stroke="#34478e" stroke-width="1"/></svg>
<svg class="a" style="left:82px;top:622px" width="14" height="11"><path d="M0 2 H4.3 L5.3 0 H13 V11 H0 Z" fill="#dcb67a"/><path d="M6 1.5 H12" stroke="#f2f2f2" stroke-width="1"/></svg>
<div class="t" style="left:101px;top:622px;font-size:14.6px;color:#1e1e1e;font-family:'Liberation Sans';">External Resources</div>
<svg class="a" style="left:64px;top:646px" width="11" height="11"><rect x="1" y="6" width="9" height="4" fill="#e9e9e9"/><rect x="0.5" y="0.5" width="10" height="10" rx="1.2" fill="none" stroke="#8c8c8c"/><path d="M2.2 5.5 H8.8" stroke="#34478e" stroke-width="1"/><path d="M5.5 2.2 V8.8" stroke="#34478e" stroke-width="1"/></svg>
<svg class="a" style="left:82px;top:644px" width="14" height="11"><path d="M0 2 H4.3 L5.3 0 H13 V11 H0 Z" fill="#dcb67a"/><path d="M6 1.5 H12" stroke="#f2f2f2" stroke-width="1"/></svg>
<div class="t" style="left:101px;top:644px;font-size:14.6px;color:#1e1e1e;font-family:'Liberation Sans';">Synonyms</div>
<svg class="a" style="left:64px;top:668px" width="11" height="11"><rect x="1" y="6" width="9" height="4" fill="#e9e9e9"/><rect x="0.5" y="0.5" width="10" height="10" rx="1.2" fill="none" stroke="#8c8c8c"/><path d="M2.2 5.5 H8.8" stroke="#34478e" stroke-width="1"/><path d="M5.5 2.2 V8.8" stroke="#34478e" stroke-width="1"/></svg>
<svg class="a" style="left:82px;top:666px" width="14" height="11"><path d="M0 2 H4.3 L5.3 0 H13 V11 H0 Z" fill="#dcb67a"/><path d="M6 1.5 H12" stroke="#f2f2f2" stroke-width="1"/></svg>
<div class="t" style="left:101px;top:666px;font-size:14.6px;color:#1e1e1e;font-family:'Liberation Sans';">Programmability</div>
<svg class="a" style="left:64px;top:690px" width="11" height="11"><rect x="1" y="6" width="9" height="4" fill="#e9e9e9"/><rect x="0.5" y="0.5" width="10" height="10" rx="1.2" fill="none" stroke="#8c8c8c"/><path d="M2.2 5.5 H8.8" stroke="#34478e" stroke-width="1"/><path d="M5.5 2.2 V8.8" stroke="#34478e" stroke-width="1"/></svg>
<svg class="a" style="left:82px;top:688px" width="14" height="11"><path d="M0 2 H4.3 L5.3 0 H13 V11 H0 Z" fill="#dcb67a"/><path d="M6 1.5 H12" stroke="#f2f2f2" stroke-width="1"/></svg>
<div class="t" style="left:101px;top:688px;font-size:14.6px;color:#1e1e1e;font-family:'Liberation Sans';">Query Store</div>
<svg class="a" style="left:64px;top:712px" width="11" height="11"><rect x="1" y="6" width="9" height="4" fill="#e9e9e9"/><rect x="0.5" y="0.5" width="10" height="10" rx="1.2" fill="none" stroke="#8c8c8c"/><path d="M2.2 5.5 H8.8" stroke="#34478e" stroke-width="1"/><path d="M5.5 2.2 V8.8" stroke="#34478e" stroke-width="1"/></svg>
<svg class="a" style="left:82px;top:709px" width="12" height="13"><rect x="1.5" y="0.5" width="10" height="12" fill="#f0f0f0" stroke="#333"/><rect x="2" y="1" width="9" height="1.5" fill="#fff"/><path d="M0 1.5 H1.2 M0 3.5 H1.2 M0 5.5 H1.2 M0 7.5 H1.2 M0 9.5 H1.2 M0 11.5 H1.2" stroke="#333" stroke-width="1"/><path d="M7.3 3.2 L5.3 6.3 H7.2 L6.2 8.6" stroke="#333" stroke-width="1" fill="none"/></svg>
<div class="t" style="left:101px;top:710px;font-size:14.6px;color:#1e1e1e;font-family:'Liberation Sans';">Extended Events</div>
<svg class="a" style="left:64px;top:734px" width="11" height="11"><rect x="1" y="6" width="9" height="4" fill="#e9e9e9"/><rect x="0.5" y="0.5" width="10" height="10" rx="1.2" fill="none" stroke="#8c8c8c"/><path d="M2.2 5.5 H8.8" stroke="#34478e" stroke-width="1"/><path d="M5.5 2.2 V8.8" stroke="#34478e" stroke-width="1"/></svg>
<svg class="a" style="left:82px;top:731px" width="12" height="13"><rect x="1.5" y="0.5" width="10" height="12" fill="#f0f0f0" stroke="#333"/><rect x="2" y="1" width="9" height="1.5" fill="#fff"/><path d="M0 1.5 H1.2 M0 3.5 H1.2 M0 5.5 H1.2 M0 7.5 H1.2 M0 9.5 H1.2 M0 11.5 H1.2" stroke="#333" stroke-width="1"/><path d="M7.3 3.2 L5.3 6.3 H7.2 L6.2 8.6" stroke="#333" stroke-width="1" fill="none"/></svg>
<div class="t" style="left:101px;top:732px;font-size:14.6px;color:#1e1e1e;font-family:'Liberation Sans';">XEvent Profiler</div>
<svg class="a" style="left:64px;top:756px" width="11" height="11"><rect x="1" y="6" width="9" height="4" fill="#e9e9e9"/><rect x="0.5" y="0.5" width="10" height="10" rx="1.2" fill="none" stroke="#8c8c8c"/><path d="M2.2 5.5 H8.8" stroke="#34478e" stroke-width="1"/><path d="M5.5 2.2 V8.8" stroke="#34478e" stroke-width="1"/></svg>
<svg class="a" style="left:82px;top:754px" width="14" height="11"><path d="M0 2 H4.3 L5.3 0 H13 V11 H0 Z" fill="#dcb67a"/><path d="M6 1.5 H12" stroke="#f2f2f2" stroke-width="1"/></svg>
<div class="t" style="left:101px;top:754px;font-size:14.6px;color:#1e1e1e;font-family:'Liberation Sans';">Storage</div>
<svg class="a" style="left:64px;top:778px" width="11" height="11"><rect x="1" y="6" width="9" height="4" fill="#e9e9e9"/><rect x="0.5" y="0.5" width="10" height="10" rx="1.2" fill="none" stroke="#8c8c8c"/><path d="M2.2 5.5 H8.8" stroke="#34478e" stroke-width="1"/><path d="M5.5 2.2 V8.8" stroke="#34478e" stroke-width="1"/></svg>
<svg class="a" style="left:82px;top:776px" width="14" height="11"><path d="M0 2 H4.3 L5.3 0 H13 V11 H0 Z" fill="#dcb67a"/><path d="M6 1.5 H12" stroke="#f2f2f2" stroke-width="1"/></svg>
<div class="t" style="left:101px;top:776px;font-size:14.6px;color:#1e1e1e;font-family:'Liberation Sans';">Security</div>
<svg class="a" style="left:26px;top:800px" width="11" height="11"><rect x="1" y="6" width="9" height="4" fill="#e9e9e9"/><rect x="0.5" y="0.5" width="10" height="10" rx="1.2" fill="none" stroke="#8c8c8c"/><path d="M2.2 5.5 H8.8" stroke="#34478e" stroke-width="1"/><path d="M5.5 2.2 V8.8" stroke="#34478e" stroke-width="1"/></svg>
<svg class="a" style="left:44px;top:798px" width="14" height="11"><path d="M0 2 H4.3 L5.3 0 H13 V11 H0 Z" fill="#dcb67a"/><path d="M6 1.5 H12" stroke="#f2f2f2" stroke-width="1"/></svg>
<div class="t" style="left:63px;top:798px;font-size:14.6px;color:#1e1e1e;font-family:'Liberation Sans';">Integration Services Catalogs</div>
</div>
<div class="a" style="left:354px;top:4px;width:323px;height:27px;background:#fff29d;"></div>
<div class="t" style="left:359px;top:11px;font-size:14.5px;color:#1e1e1e;font-family:'Liberation Sans';">SQLQuery21.sql - r...mputers (adm (51))</div>
<svg class="a" style="left:633px;top:11px" width="12" height="11"><path d="M0.5 5.5 H5" stroke="#6b603c" stroke-width="1.3"/><path d="M5.5 1 V10.5" stroke="#6b603c" stroke-width="1.5"/><rect x="6.2" y="2.7" width="4.3" height="5.6" fill="none" stroke="#6b603c" stroke-width="1.4"/><path d="M6 8.2 H11" stroke="#6b603c" stroke-width="1.6"/></svg>
<svg class="a" style="left:657px;top:11px" width="12" height="12"><path d="M1 1 L11 11 M11 1 L1 11" stroke="#6b603c" stroke-width="1.7"/></svg>
<div class="a" style="left:677px;top:4px;width:1303px;height:25px;background:#364e6f;"></div>
<div class="t" style="left:683px;top:11px;font-size:14.5px;color:#ffffff;font-family:'Liberation Sans';">SQLQuery20.sql - r...mputers (adm (77))</div>
<div class="t" style="left:1008px;top:11px;font-size:14.5px;color:#ffffff;font-family:'Liberation Sans';">SQLQuery19.sql - r...mputers (adm (82))</div>
<div class="t" style="left:1333px;top:11px;font-size:14.5px;color:#ffffff;font-family:'Liberation Sans';">SQLQuery18.sql - r...mputers (adm (69))</div>
<div class="t" style="left:1658px;top:11px;font-size:14.5px;color:#ffffff;font-family:'Liberation Sans';">DeleteTables.sql -...omputers (adm (73))</div>
<div class="a" style="left:354px;top:29px;width:1857px;height:2px;background:#fff29d;"></div>
<svg class="a" style="left:2201px;top:10px" width="10" height="11"><path d="M0 1 H10 M0 2 H10" stroke="#cfd6e5" stroke-width="1"/><path d="M0 5 H10 L5 10 Z" fill="#cfd6e5"/></svg>
<div class="a" style="left:354px;top:31px;width:1837px;height:283px;background:#f5f6fa;"></div>
<div class="a" style="left:354px;top:31px;width:1px;height:283px;background:#94a3c9;"></div>
<div class="a" style="left:355px;top:31px;width:21px;height:283px;background:#e6e7e9;"></div>
<div class="a" style="left:376px;top:31px;width:13px;height:283px;background:#ffffff;"></div>
<div class="a" style="left:389px;top:31px;width:11px;height:283px;background:#e8ebf5;"></div>
<div class="a" style="left:389px;top:35px;width:11px;height:14px;background:#ffffff;"></div>
<svg class="a" style="left:389px;top:36px" width="11" height="11"><rect x="0.5" y="0.5" width="10" height="10" fill="#fff" stroke="#9a9a9a"/><path d="M2.5 5.5 H8.5" stroke="#3c3c3c" stroke-width="1.2"/></svg>
<div class="a" style="left:395px;top:49px;width:1px;height:265px;background:#b8bdca;"></div>
<div class="a" style="left:400px;top:31px;width:1789px;height:21px;background:#f7f8fb;border-top:1px solid #e9ebf2;border-bottom:2px solid #e9ebf2;border-right:2px solid #ecedf3"></div>
<div class="a" style="left:402px;top:32px;width:2px;height:19px;background:#1e1e1e;"></div>
<div class="a" style="left:400px;top:31px;width:1791px;height:283px;overflow:hidden">
<div class="t" style="left:3px;top:4.0px;font-family:'Liberation Mono';font-size:15.05px"><span style="color:#0000ff">SELECT TOP</span> <span style="color:#808080">(</span>1000<span style="color:#808080">)</span> [id]</div>
<svg class="a" style="left:164.5px;top:16.5px" width="37" height="5"><path d="M0 2.5 Q2 0.5 4 2.5 T8 2.5 Q10 0.5 12 2.5 T16 2.5 Q18 0.5 20 2.5 T24 2.5 Q26 0.5 28 2.5 T32 2.5 Q34 0.5 36 2.5 T40 2.5" fill="none" stroke="#ff4a4a" stroke-width="1.2"/></svg>
<div class="t" style="left:3px;top:25.2px;font-family:'Liberation Mono';font-size:15.05px"><span style="color:#808080">      ,</span>[device_name]</div>
<svg class="a" style="left:65.2px;top:37.7px" width="118" height="5"><path d="M0 2.5 Q2 0.5 4 2.5 T8 2.5 Q10 0.5 12 2.5 T16 2.5 Q18 0.5 20 2.5 T24 2.5 Q26 0.5 28 2.5 T32 2.5 Q34 0.5 36 2.5 T40 2.5 Q42 0.5 44 2.5 T48 2.5 Q50 0.5 52 2.5 T56 2.5 Q58 0.5 60 2.5 T64 2.5 Q66 0.5 68 2.5 T72 2.5 Q74 0.5 76 2.5 T80 2.5 Q82 0.5 84 2.5 T88 2.5 Q90 0.5 92 2.5 T96 2.5 Q98 0.5 100 2.5 T104 2.5 Q106 0.5 108 2.5 T112 2.5 Q114 0.5 116 2.5 T120 2.5" fill="none" stroke="#ff4a4a" stroke-width="1.2"/></svg>
<div class="t" style="left:3px;top:46.4px;font-family:'Liberation Mono';font-size:15.05px"><span style="color:#808080">      ,</span>[app_name]</div>
<svg class="a" style="left:65.2px;top:58.9px" width="91" height="5"><path d="M0 2.5 Q2 0.5 4 2.5 T8 2.5 Q10 0.5 12 2.5 T16 2.5 Q18 0.5 20 2.5 T24 2.5 Q26 0.5 28 2.5 T32 2.5 Q34 0.5 36 2.5 T40 2.5 Q42 0.5 44 2.5 T48 2.5 Q50 0.5 52 2.5 T56 2.5 Q58 0.5 60 2.5 T64 2.5 Q66 0.5 68 2.5 T72 2.5 Q74 0.5 76 2.5 T80 2.5 Q82 0.5 84 2.5 T88 2.5 Q90 0.5 92 2.5 T96 2.5" fill="none" stroke="#ff4a4a" stroke-width="1.2"/></svg>
<div class="t" style="left:3px;top:67.6px;font-family:'Liberation Mono';font-size:15.05px"><span style="color:#808080">      ,</span>[start_ts_utc]</div>
<svg class="a" style="left:65.2px;top:80.1px" width="127" height="5"><path d="M0 2.5 Q2 0.5 4 2.5 T8 2.5 Q10 0.5 12 2.5 T16 2.5 Q18 0.5 20 2.5 T24 2.5 Q26 0.5 28 2.5 T32 2.5 Q34 0.5 36 2.5 T40 2.5 Q42 0.5 44 2.5 T48 2.5 Q50 0.5 52 2.5 T56 2.5 Q58 0.5 60 2.5 T64 2.5 Q66 0.5 68 2.5 T72 2.5 Q74 0.5 76 2.5 T80 2.5 Q82 0.5 84 2.5 T88 2.5 Q90 0.5 92 2.5 T96 2.5 Q98 0.5 100 2.5 T104 2.5 Q106 0.5 108 2.5 T112 2.5 Q114 0.5 116 2.5 T120 2.5 Q122 0.5 124 2.5 T128 2.5" fill="none" stroke="#ff4a4a" stroke-width="1.2"/></svg>
<div class="t" style="left:3px;top:88.8px;font-family:'Liberation Mono';font-size:15.05px"><span style="color:#808080">      ,</span>[end_ts_utc]</div>
<svg class="a" style="left:65.2px;top:101.3px" width="109" height="5"><path d="M0 2.5 Q2 0.5 4 2.5 T8 2.5 Q10 0.5 12 2.5 T16 2.5 Q18 0.5 20 2.5 T24 2.5 Q26 0.5 28 2.5 T32 2.5 Q34 0.5 36 2.5 T40 2.5 Q42 0.5 44 2.5 T48 2.5 Q50 0.5 52 2.5 T56 2.5 Q58 0.5 60 2.5 T64 2.5 Q66 0.5 68 2.5 T72 2.5 Q74 0.5 76 2.5 T80 2.5 Q82 0.5 84 2.5 T88 2.5 Q90 0.5 92 2.5 T96 2.5 Q98 0.5 100 2.5 T104 2.5 Q106 0.5 108 2.5 T112 2.5" fill="none" stroke="#ff4a4a" stroke-width="1.2"/></svg>
<div class="t" style="left:3px;top:110.0px;font-family:'Liberation Mono';font-size:15.05px"><span style="color:#808080">      ,</span>[day_user_id]</div>
<svg class="a" style="left:65.2px;top:122.5px" width="118" height="5"><path d="M0 2.5 Q2 0.5 4 2.5 T8 2.5 Q10 0.5 12 2.5 T16 2.5 Q18 0.5 20 2.5 T24 2.5 Q26 0.5 28 2.5 T32 2.5 Q34 0.5 36 2.5 T40 2.5 Q42 0.5 44 2.5 T48 2.5 Q50 0.5 52 2.5 T56 2.5 Q58 0.5 60 2.5 T64 2.5 Q66 0.5 68 2.5 T72 2.5 Q74 0.5 76 2.5 T80 2.5 Q82 0.5 84 2.5 T88 2.5 Q90 0.5 92 2.5 T96 2.5 Q98 0.5 100 2.5 T104 2.5 Q106 0.5 108 2.5 T112 2.5 Q114 0.5 116 2.5 T120 2.5" fill="none" stroke="#ff4a4a" stroke-width="1.2"/></svg>
<div class="t" style="left:3px;top:131.2px;font-family:'Liberation Mono';font-size:15.05px"><span style="color:#808080">      ,</span>[asset_id]</div>
<svg class="a" style="left:65.2px;top:143.7px" width="91" height="5"><path d="M0 2.5 Q2 0.5 4 2.5 T8 2.5 Q10 0.5 12 2.5 T16 2.5 Q18 0.5 20 2.5 T24 2.5 Q26 0.5 28 2.5 T32 2.5 Q34 0.5 36 2.5 T40 2.5 Q42 0.5 44 2.5 T48 2.5 Q50 0.5 52 2.5 T56 2.5 Q58 0.5 60 2.5 T64 2.5 Q66 0.5 68 2.5 T72 2.5 Q74 0.5 76 2.5 T80 2.5 Q82 0.5 84 2.5 T88 2.5 Q90 0.5 92 2.5 T96 2.5" fill="none" stroke="#ff4a4a" stroke-width="1.2"/></svg>
<div class="t" style="left:3px;top:152.4px;font-family:'Liberation Mono';font-size:15.05px"><span style="color:#808080">      ,</span>[batch_user_id]</div>
<svg class="a" style="left:65.2px;top:164.9px" width="136" height="5"><path d="M0 2.5 Q2 0.5 4 2.5 T8 2.5 Q10 0.5 12 2.5 T16 2.5 Q18 0.5 20 2.5 T24 2.5 Q26 0.5 28 2.5 T32 2.5 Q34 0.5 36 2.5 T40 2.5 Q42 0.5 44 2.5 T48 2.5 Q50 0.5 52 2.5 T56 2.5 Q58 0.5 60 2.5 T64 2.5 Q66 0.5 68 2.5 T72 2.5 Q74 0.5 76 2.5 T80 2.5 Q82 0.5 84 2.5 T88 2.5 Q90 0.5 92 2.5 T96 2.5 Q98 0.5 100 2.5 T104 2.5 Q106 0.5 108 2.5 T112 2.5 Q114 0.5 116 2.5 T120 2.5 Q122 0.5 124 2.5 T128 2.5 Q130 0.5 132 2.5 T136 2.5 Q138 0.5 140 2.5 T144 2.5" fill="none" stroke="#ff4a4a" stroke-width="1.2"/></svg>
<div class="t" style="left:3px;top:173.6px;font-family:'Liberation Mono';font-size:15.05px"><span style="color:#808080">      ,</span>[flow_time_value_norm]</div>
<svg class="a" style="left:65.2px;top:186.1px" width="200" height="5"><path d="M0 2.5 Q2 0.5 4 2.5 T8 2.5 Q10 0.5 12 2.5 T16 2.5 Q18 0.5 20 2.5 T24 2.5 Q26 0.5 28 2.5 T32 2.5 Q34 0.5 36 2.5 T40 2.5 Q42 0.5 44 2.5 T48 2.5 Q50 0.5 52 2.5 T56 2.5 Q58 0.5 60 2.5 T64 2.5 Q66 0.5 68 2.5 T72 2.5 Q74 0.5 76 2.5 T80 2.5 Q82 0.5 84 2.5 T88 2.5 Q90 0.5 92 2.5 T96 2.5 Q98 0.5 100 2.5 T104 2.5 Q106 0.5 108 2.5 T112 2.5 Q114 0.5 116 2.5 T120 2.5 Q122 0.5 124 2.5 T128 2.5 Q130 0.5 132 2.5 T136 2.5 Q138 0.5 140 2.5 T144 2.5 Q146 0.5 148 2.5 T152 2.5 Q154 0.5 156 2.5 T160 2.5 Q162 0.5 164 2.5 T168 2.5 Q170 0.5 172 2.5 T176 2.5 Q178 0.5 180 2.5 T184 2.5 Q186 0.5 188 2.5 T192 2.5 Q194 0.5 196 2.5 T200 2.5" fill="none" stroke="#ff4a4a" stroke-width="1.2"/></svg>
<div class="t" style="left:3px;top:194.8px;font-family:'Liberation Mono';font-size:15.05px"><span style="color:#808080">      ,</span>[flow_time_units_norm]</div>
<svg class="a" style="left:65.2px;top:207.3px" width="200" height="5"><path d="M0 2.5 Q2 0.5 4 2.5 T8 2.5 Q10 0.5 12 2.5 T16 2.5 Q18 0.5 20 2.5 T24 2.5 Q26 0.5 28 2.5 T32 2.5 Q34 0.5 36 2.5 T40 2.5 Q42 0.5 44 2.5 T48 2.5 Q50 0.5 52 2.5 T56 2.5 Q58 0.5 60 2.5 T64 2.5 Q66 0.5 68 2.5 T72 2.5 Q74 0.5 76 2.5 T80 2.5 Q82 0.5 84 2.5 T88 2.5 Q90 0.5 92 2.5 T96 2.5 Q98 0.5 100 2.5 T104 2.5 Q106 0.5 108 2.5 T112 2.5 Q114 0.5 116 2.5 T120 2.5 Q122 0.5 124 2.5 T128 2.5 Q130 0.5 132 2.5 T136 2.5 Q138 0.5 140 2.5 T144 2.5 Q146 0.5 148 2.5 T152 2.5 Q154 0.5 156 2.5 T160 2.5 Q162 0.5 164 2.5 T168 2.5 Q170 0.5 172 2.5 T176 2.5 Q178 0.5 180 2.5 T184 2.5 Q186 0.5 188 2.5 T192 2.5 Q194 0.5 196 2.5 T200 2.5" fill="none" stroke="#ff4a4a" stroke-width="1.2"/></svg>
<div class="t" style="left:3px;top:216.0px;font-family:'Liberation Mono';font-size:15.05px"><span style="color:#808080">      ,</span>[flow_time_value_user]</div>
<svg class="a" style="left:65.2px;top:228.5px" width="200" height="5"><path d="M0 2.5 Q2 0.5 4 2.5 T8 2.5 Q10 0.5 12 2.5 T16 2.5 Q18 0.5 20 2.5 T24 2.5 Q26 0.5 28 2.5 T32 2.5 Q34 0.5 36 2.5 T40 2.5 Q42 0.5 44 2.5 T48 2.5 Q50 0.5 52 2.5 T56 2.5 Q58 0.5 60 2.5 T64 2.5 Q66 0.5 68 2.5 T72 2.5 Q74 0.5 76 2.5 T80 2.5 Q82 0.5 84 2.5 T88 2.5 Q90 0.5 92 2.5 T96 2.5 Q98 0.5 100 2.5 T104 2.5 Q106 0.5 108 2.5 T112 2.5 Q114 0.5 116 2.5 T120 2.5 Q122 0.5 124 2.5 T128 2.5 Q130 0.5 132 2.5 T136 2.5 Q138 0.5 140 2.5 T144 2.5 Q146 0.5 148 2.5 T152 2.5 Q154 0.5 156 2.5 T160 2.5 Q162 0.5 164 2.5 T168 2.5 Q170 0.5 172 2.5 T176 2.5 Q178 0.5 180 2.5 T184 2.5 Q186 0.5 188 2.5 T192 2.5 Q194 0.5 196 2.5 T200 2.5" fill="none" stroke="#ff4a4a" stroke-width="1.2"/></svg>
<div class="t" style="left:3px;top:237.2px;font-family:'Liberation Mono';font-size:15.05px"><span style="color:#808080">      ,</span>[flow_time_units_user]</div>
<svg class="a" style="left:65.2px;top:249.7px" width="200" height="5"><path d="M0 2.5 Q2 0.5 4 2.5 T8 2.5 Q10 0.5 12 2.5 T16 2.5 Q18 0.5 20 2.5 T24 2.5 Q26 0.5 28 2.5 T32 2.5 Q34 0.5 36 2.5 T40 2.5 Q42 0.5 44 2.5 T48 2.5 Q50 0.5 52 2.5 T56 2.5 Q58 0.5 60 2.5 T64 2.5 Q66 0.5 68 2.5 T72 2.5 Q74 0.5 76 2.5 T80 2.5 Q82 0.5 84 2.5 T88 2.5 Q90 0.5 92 2.5 T96 2.5 Q98 0.5 100 2.5 T104 2.5 Q106 0.5 108 2.5 T112 2.5 Q114 0.5 116 2.5 T120 2.5 Q122 0.5 124 2.5 T128 2.5 Q130 0.5 132 2.5 T136 2.5 Q138 0.5 140 2.5 T144 2.5 Q146 0.5 148 2.5 T152 2.5 Q154 0.5 156 2.5 T160 2.5 Q162 0.5 164 2.5 T168 2.5 Q170 0.5 172 2.5 T176 2.5 Q178 0.5 180 2.5 T184 2.5 Q186 0.5 188 2.5 T192 2.5 Q194 0.5 196 2.5 T200 2.5" fill="none" stroke="#ff4a4a" stroke-width="1.2"/></svg>
<div class="t" style="left:3px;top:258.4px;font-family:'Liberation Mono';font-size:15.05px"><span style="color:#808080">      ,</span>[sp_raw_avg_value_norm]</div>
<svg class="a" style="left:65.2px;top:270.9px" width="209" height="5"><path d="M0 2.5 Q2 0.5 4 2.5 T8 2.5 Q10 0.5 12 2.5 T16 2.5 Q18 0.5 20 2.5 T24 2.5 Q26 0.5 28 2.5 T32 2.5 Q34 0.5 36 2.5 T40 2.5 Q42 0.5 44 2.5 T48 2.5 Q50 0.5 52 2.5 T56 2.5 Q58 0.5 60 2.5 T64 2.5 Q66 0.5 68 2.5 T72 2.5 Q74 0.5 76 2.5 T80 2.5 Q82 0.5 84 2.5 T88 2.5 Q90 0.5 92 2.5 T96 2.5 Q98 0.5 100 2.5 T104 2.5 Q106 0.5 108 2.5 T112 2.5 Q114 0.5 116 2.5 T120 2.5 Q122 0.5 124 2.5 T128 2.5 Q130 0.5 132 2.5 T136 2.5 Q138 0.5 140 2.5 T144 2.5 Q146 0.5 148 2.5 T152 2.5 Q154 0.5 156 2.5 T160 2.5 Q162 0.5 164 2.5 T168 2.5 Q170 0.5 172 2.5 T176 2.5 Q178 0.5 180 2.5 T184 2.5 Q186 0.5 188 2.5 T192 2.5 Q194 0.5 196 2.5 T200 2.5 Q202 0.5 204 2.5 T208 2.5 Q210 0.5 212 2.5 T216 2.5" fill="none" stroke="#ff4a4a" stroke-width="1.2"/></svg>
<div class="t" style="left:3px;top:279.6px;font-family:'Liberation Mono';font-size:15.05px"><span style="color:#808080">      ,</span>[sp_raw_avg_units_norm]</div>
<svg class="a" style="left:65.2px;top:292.1px" width="209" height="5"><path d="M0 2.5 Q2 0.5 4 2.5 T8 2.5 Q10 0.5 12 2.5 T16 2.5 Q18 0.5 20 2.5 T24 2.5 Q26 0.5 28 2.5 T32 2.5 Q34 0.5 36 2.5 T40 2.5 Q42 0.5 44 2.5 T48 2.5 Q50 0.5 52 2.5 T56 2.5 Q58 0.5 60 2.5 T64 2.5 Q66 0.5 68 2.5 T72 2.5 Q74 0.5 76 2.5 T80 2.5 Q82 0.5 84 2.5 T88 2.5 Q90 0.5 92 2.5 T96 2.5 Q98 0.5 100 2.5 T104 2.5 Q106 0.5 108 2.5 T112 2.5 Q114 0.5 116 2.5 T120 2.5 Q122 0.5 124 2.5 T128 2.5 Q130 0.5 132 2.5 T136 2.5 Q138 0.5 140 2.5 T144 2.5 Q146 0.5 148 2.5 T152 2.5 Q154 0.5 156 2.5 T160 2.5 Q162 0.5 164 2.5 T168 2.5 Q170 0.5 172 2.5 T176 2.5 Q178 0.5 180 2.5 T184 2.5 Q186 0.5 188 2.5 T192 2.5 Q194 0.5 196 2.5 T200 2.5 Q202 0.5 204 2.5 T208 2.5 Q210 0.5 212 2.5 T216 2.5" fill="none" stroke="#ff4a4a" stroke-width="1.2"/></svg>
</div>
<div class="a" style="left:2191px;top:31px;width:20px;height:283px;background:#e8e8ec;"></div>
<div class="a" style="left:2191px;top:31px;width:20px;height:21px;background:#e6edfb;border-left:1px solid #a9b3c7;border-bottom:1px solid #a9b3c7"></div>
<svg class="a" style="left:2196px;top:33px" width="15" height="18"><rect x="0" y="7.5" width="14" height="3" fill="#aeb6c6"/><path d="M0 7.6 H14 M0 10.4 H14" stroke="#1e2535" stroke-width="1.2"/><path d="M7 3.5 V7 M7 11 V14.5" stroke="#3a4255" stroke-width="1.5"/><path d="M4.6 4.2 L7 1.2 L9.4 4.2 Z M4.6 13.8 L7 16.8 L9.4 13.8 Z" fill="#1e2535"/></svg>
<svg class="a" style="left:2197px;top:59px" width="12" height="7"><path d="M0 6.5 L6 0.5 L12 6.5 Z" fill="#868999"/></svg>
<div class="a" style="left:2191px;top:72px;width:20px;height:3px;background:#0000ff;"></div>
<div class="a" style="left:2196px;top:75px;width:12px;height:30px;background:#c2c3c9;"></div>
<div class="a" style="left:2208px;top:75px;width:3px;height:217px;background:#ff0000;"></div>
<svg class="a" style="left:2197px;top:300px" width="12" height="7"><path d="M0 0.5 L6 6.5 L12 0.5 Z" fill="#868999"/></svg>
<div class="a" style="left:354px;top:314px;width:1837px;height:21px;background:#e8e8ec;"></div>
<div class="a" style="left:355px;top:314px;width:75px;height:21px;background:#ffffff;border:1px solid #b9c3dd"></div>
<div class="t" style="left:359px;top:319px;font-size:14.3px;color:#1e1e1e;font-family:'Liberation Sans';">100 %</div>
<svg class="a" style="left:418px;top:322px" width="9" height="5"><path d="M0 0 H8 L4 4 Z" fill="#1e1e1e"/></svg>
<svg class="a" style="left:437px;top:318px" width="8" height="12"><path d="M7 0 L0 6 L7 12 Z" fill="#c2c5cf"/></svg>
<svg class="a" style="left:2177px;top:318px" width="8" height="12"><path d="M0 0 L7 6 L0 12 Z" fill="#c2c5cf"/></svg>
<div class="a" style="left:2191px;top:314px;width:20px;height:21px;background:#e8e8ec;"></div>
<div class="a" style="left:354px;top:335px;width:1857px;height:941px;background:#ffffff;"></div>
<div class="a" style="left:354px;top:335px;width:1857px;height:29px;background:#f0f0f0;"></div>
<div class="a" style="left:355px;top:339px;width:83px;height:25px;background:#ffffff;border:1px solid #d9d9d9;border-bottom:none"></div>
<svg class="a" style="left:365px;top:344px" width="13" height="12"><rect width="13" height="12" fill="#424242"/><g fill="#fff"><rect x="1" y="3" width="3" height="2"/><rect x="5" y="3" width="3" height="2"/><rect x="9" y="3" width="3" height="2"/><rect x="1" y="6" width="3" height="2"/><rect x="5" y="6" width="3" height="2"/><rect x="9" y="6" width="3" height="2"/><rect x="1" y="9" width="3" height="2"/><rect x="5" y="9" width="3" height="2"/><rect x="9" y="9" width="3" height="2"/></g></svg>
<div class="t" style="left:385px;top:344px;font-size:13.5px;color:#1e1e1e;font-family:'Liberation Sans';">Results</div>
<div class="a" style="left:437px;top:341px;width:95px;height:21px;background:#f0f0f0;border:1px solid #d9d9d9;border-bottom:none"></div>
<svg class="a" style="left:442px;top:345px" width="16" height="15"><rect x="8" y="0" width="7" height="11.5" fill="#404040"/><path d="M9 2.5 H14 M9 4.5 H14" stroke="#fff" stroke-width="1"/><rect x="12.5" y="9" width="1.5" height="1.5" fill="#fff"/><path d="M1.5 5.5 H6.5 L8.5 7.5 V13.5 H1.5 Z" fill="#fff" stroke="#404040" stroke-width="1.1"/><path d="M3 9.5 H7 M3 11.5 H7" stroke="#404040" stroke-width="1"/></svg>
<div class="t" style="left:464px;top:345px;font-size:14px;color:#1e1e1e;font-family:'Liberation Sans';">Messages</div>
<div class="a" style="left:359px;top:364px;width:1852px;height:886px;background:#ffffff;border:1px solid #a0a0a0;border-right:none"></div>
<div class="a" style="left:360px;top:365px;width:1829px;height:863px;overflow:hidden">
<div class="a" style="left:35px;top:0;width:1px;height:863px;background:#e6e6e6"></div>
<div class="a" style="left:66px;top:0;width:1px;height:863px;background:#e6e6e6"></div>
<div class="a" style="left:156px;top:0;width:1px;height:863px;background:#e6e6e6"></div>
<div class="a" style="left:232px;top:0;width:1px;height:863px;background:#e6e6e6"></div>
<div class="a" style="left:456px;top:0;width:1px;height:863px;background:#e6e6e6"></div>
<div class="a" style="left:680px;top:0;width:1px;height:863px;background:#e6e6e6"></div>
<div class="a" style="left:763px;top:0;width:1px;height:863px;background:#e6e6e6"></div>
<div class="a" style="left:825px;top:0;width:1px;height:863px;background:#e6e6e6"></div>
<div class="a" style="left:919px;top:0;width:1px;height:863px;background:#e6e6e6"></div>
<div class="a" style="left:1060px;top:0;width:1px;height:863px;background:#e6e6e6"></div>
<div class="a" style="left:1198px;top:0;width:1px;height:863px;background:#e6e6e6"></div>
<div class="a" style="left:1334px;top:0;width:1px;height:863px;background:#e6e6e6"></div>
<div class="a" style="left:1467px;top:0;width:1px;height:863px;background:#e6e6e6"></div>
<div class="a" style="left:1621px;top:0;width:1px;height:863px;background:#e6e6e6"></div>
<div class="a" style="left:1773px;top:0;width:1px;height:863px;background:#e6e6e6"></div>
<div class="t" style="left:41px;top:5px;font-size:12.3px;color:#1e1e1e;font-family:'Liberation Sans';">id</div>
<div class="t" style="left:72px;top:5px;font-size:12.3px;color:#1e1e1e;font-family:'Liberation Sans';">device_name</div>
<div class="t" style="left:162px;top:5px;font-size:12.3px;color:#1e1e1e;font-family:'Liberation Sans';">app_name</div>
<div class="t" style="left:238px;top:5px;font-size:12.3px;color:#1e1e1e;font-family:'Liberation Sans';">start_ts_utc</div>
<div class="t" style="left:462px;top:5px;font-size:12.3px;color:#1e1e1e;font-family:'Liberation Sans';">end_ts_utc</div>
<div class="t" style="left:686px;top:5px;font-size:12.3px;color:#1e1e1e;font-family:'Liberation Sans';">day_user_id</div>
<div class="t" style="left:769px;top:5px;font-size:12.3px;color:#1e1e1e;font-family:'Liberation Sans';">asset_id</div>
<div class="t" style="left:831px;top:5px;font-size:12.3px;color:#1e1e1e;font-family:'Liberation Sans';">batch_user_id</div>
<div class="t" style="left:925px;top:5px;font-size:12.3px;color:#1e1e1e;font-family:'Liberation Sans';">flow_time_value_norm</div>
<div class="t" style="left:1066px;top:5px;font-size:12.3px;color:#1e1e1e;font-family:'Liberation Sans';">flow_time_units_norm</div>
<div class="t" style="left:1204px;top:5px;font-size:12.3px;color:#1e1e1e;font-family:'Liberation Sans';">flow_time_value_user</div>
<div class="t" style="left:1340px;top:5px;font-size:12.3px;color:#1e1e1e;font-family:'Liberation Sans';">flow_time_units_user</div>
<div class="t" style="left:1473px;top:5px;font-size:12.3px;color:#1e1e1e;font-family:'Liberation Sans';">sp_raw_avg_value_norm</div>
<div class="t" style="left:1627px;top:5px;font-size:12.3px;color:#1e1e1e;font-family:'Liberation Sans';">sp_raw_avg_units_norm</div>
<div class="t" style="left:1779px;top:5px;font-size:12.3px;color:#1e1e1e;font-family:'Liberation Sans';">sp_raw_avg_value_user</div>
<div class="a" style="left:0;top:19px;width:1829px;height:1px;background:#e6e6e6"></div>
<div class="a" style="left:0;top:39px;width:1829px;height:1px;background:#ececec"></div>
<div class="a" style="left:35px;top:20px;width:32px;height:20px;background:#e4e8ee;border:1px dotted #000"></div>
<div class="t" style="left:6px;top:24.9px;font-size:12.3px;color:#000;font-family:'Liberation Sans';letter-spacing:0.2px">1</div>
<div class="t" style="left:43px;top:24.2px;font-size:12.3px;color:#000;font-family:'Liberation Sans';letter-spacing:0.2px">1</div>
<div class="t" style="left:74px;top:24.2px;font-size:12.3px;color:#000;font-family:'Liberation Sans';letter-spacing:0.2px">TestTables</div>
<div class="t" style="left:164px;top:24.2px;font-size:12.3px;color:#000;font-family:'Liberation Sans';letter-spacing:0.2px">GF01</div>
<div class="t" style="left:240px;top:24.2px;font-size:12.3px;color:#000;font-family:'Liberation Sans';letter-spacing:0.1px">2024-10-16 11:40:45.1395662 +00:00</div>
<div class="t" style="left:464px;top:24.2px;font-size:12.3px;color:#000;font-family:'Liberation Sans';letter-spacing:0.1px">2024-10-16 11:41:00.0000000 +00:00</div>
<div class="t" style="left:688px;top:24.2px;font-size:12.3px;color:#000;font-family:'Liberation Sans';letter-spacing:0.2px">1</div>
<div class="t" style="left:771px;top:24.2px;font-size:12.3px;color:#000;font-family:'Liberation Sans';letter-spacing:0.2px">0</div>
<div class="t" style="left:833px;top:24.2px;font-size:12.3px;color:#000;font-family:'Liberation Sans';letter-spacing:0.2px">0</div>
<div class="t" style="left:927px;top:24.2px;font-size:12.3px;color:#000;font-family:'Liberation Sans';letter-spacing:0.2px">0</div>
<div class="t" style="left:1068px;top:24.2px;font-size:12.3px;color:#000;font-family:'Liberation Sans';letter-spacing:0.2px">sec</div>
<div class="t" style="left:1206px;top:24.2px;font-size:12.3px;color:#000;font-family:'Liberation Sans';letter-spacing:0.2px">0</div>
<div class="t" style="left:1342px;top:24.2px;font-size:12.3px;color:#000;font-family:'Liberation Sans';letter-spacing:0.2px">sec</div>
<div class="t" style="left:1475px;top:24.2px;font-size:12.3px;color:#000;font-family:'Liberation Sans';letter-spacing:0.2px">0</div>
<div class="t" style="left:1629px;top:24.2px;font-size:12.3px;color:#000;font-family:'Liberation Sans';letter-spacing:0.2px">kPa</div>
<div class="t" style="left:1781px;top:24.2px;font-size:12.3px;color:#000;font-family:'Liberation Sans';letter-spacing:0.2px">0</div>
<div class="a" style="left:0;top:59px;width:1829px;height:1px;background:#ececec"></div>
<div class="t" style="left:6px;top:44.9px;font-size:12.3px;color:#000;font-family:'Liberation Sans';letter-spacing:0.2px">2</div>
<div class="t" style="left:43px;top:44.2px;font-size:12.3px;color:#000;font-family:'Liberation Sans';letter-spacing:0.2px">2</div>
<div class="t" style="left:74px;top:44.2px;font-size:12.3px;color:#000;font-family:'Liberation Sans';letter-spacing:0.2px">TestTables</div>
<div class="t" style="left:164px;top:44.2px;font-size:12.3px;color:#000;font-family:'Liberation Sans';letter-spacing:0.2px">GF01</div>
<div class="t" style="left:240px;top:44.2px;font-size:12.3px;color:#000;font-family:'Liberation Sans';letter-spacing:0.1px">2024-10-16 11:41:00.0000000 +00:00</div>
<div class="t" style="left:464px;top:44.2px;font-size:12.3px;color:#000;font-family:'Liberation Sans';letter-spacing:0.1px">2024-10-16 11:42:00.0000000 +00:00</div>
<div class="t" style="left:688px;top:44.2px;font-size:12.3px;color:#000;font-family:'Liberation Sans';letter-spacing:0.2px">1</div>
<div class="t" style="left:771px;top:44.2px;font-size:12.3px;color:#000;font-family:'Liberation Sans';letter-spacing:0.2px">0</div>
<div class="t" style="left:833px;top:44.2px;font-size:12.3px;color:#000;font-family:'Liberation Sans';letter-spacing:0.2px">0</div>
<div class="t" style="left:927px;top:44.2px;font-size:12.3px;color:#000;font-family:'Liberation Sans';letter-spacing:0.2px">53</div>
<div class="t" style="left:1068px;top:44.2px;font-size:12.3px;color:#000;font-family:'Liberation Sans';letter-spacing:0.2px">sec</div>
<div class="t" style="left:1206px;top:44.2px;font-size:12.3px;color:#000;font-family:'Liberation Sans';letter-spacing:0.2px">53</div>
<div class="t" style="left:1342px;top:44.2px;font-size:12.3px;color:#000;font-family:'Liberation Sans';letter-spacing:0.2px">sec</div>
<div class="t" style="left:1475px;top:44.2px;font-size:12.3px;color:#000;font-family:'Liberation Sans';letter-spacing:0.2px">876.01</div>
<div class="t" style="left:1629px;top:44.2px;font-size:12.3px;color:#000;font-family:'Liberation Sans';letter-spacing:0.2px">kPa</div>
<div class="t" style="left:1781px;top:44.2px;font-size:12.3px;color:#000;font-family:'Liberation Sans';letter-spacing:0.2px">876.01</div>
<div class="a" style="left:0;top:79px;width:1829px;height:1px;background:#ececec"></div>
<div class="t" style="left:6px;top:64.9px;font-size:12.3px;color:#000;font-family:'Liberation Sans';letter-spacing:0.2px">3</div>
<div class="t" style="left:43px;top:64.2px;font-size:12.3px;color:#000;font-family:'Liberation Sans';letter-spacing:0.2px">3</div>
<div class="t" style="left:74px;top:64.2px;font-size:12.3px;color:#000;font-family:'Liberation Sans';letter-spacing:0.2px">TestTables</div>
<div class="t" style="left:164px;top:64.2px;font-size:12.3px;color:#000;font-family:'Liberation Sans';letter-spacing:0.2px">GF01</div>
<div class="t" style="left:240px;top:64.2px;font-size:12.3px;color:#000;font-family:'Liberation Sans';letter-spacing:0.1px">2024-10-16 11:42:00.0000000 +00:00</div>
<div class="t" style="left:464px;top:64.2px;font-size:12.3px;color:#000;font-family:'Liberation Sans';letter-spacing:0.1px">2024-10-16 11:43:00.0000000 +00:00</div>
<div class="t" style="left:688px;top:64.2px;font-size:12.3px;color:#000;font-family:'Liberation Sans';letter-spacing:0.2px">1</div>
<div class="t" style="left:771px;top:64.2px;font-size:12.3px;color:#000;font-family:'Liberation Sans';letter-spacing:0.2px">0</div>
<div class="t" style="left:833px;top:64.2px;font-size:12.3px;color:#000;font-family:'Liberation Sans';letter-spacing:0.2px">0</div>
<div class="t" style="left:927px;top:64.2px;font-size:12.3px;color:#000;font-family:'Liberation Sans';letter-spacing:0.2px">60</div>
<div class="t" style="left:1068px;top:64.2px;font-size:12.3px;color:#000;font-family:'Liberation Sans';letter-spacing:0.2px">sec</div>
<div class="t" style="left:1206px;top:64.2px;font-size:12.3px;color:#000;font-family:'Liberation Sans';letter-spacing:0.2px">60</div>
<div class="t" style="left:1342px;top:64.2px;font-size:12.3px;color:#000;font-family:'Liberation Sans';letter-spacing:0.2px">sec</div>
<div class="t" style="left:1475px;top:64.2px;font-size:12.3px;color:#000;font-family:'Liberation Sans';letter-spacing:0.2px">876.01</div>
<div class="t" style="left:1629px;top:64.2px;font-size:12.3px;color:#000;font-family:'Liberation Sans';letter-spacing:0.2px">kPa</div>
<div class="t" style="left:1781px;top:64.2px;font-size:12.3px;color:#000;font-family:'Liberation Sans';letter-spacing:0.2px">876.01</div>
<div class="a" style="left:0;top:99px;width:1829px;height:1px;background:#ececec"></div>
<div class="t" style="left:6px;top:84.9px;font-size:12.3px;color:#000;font-family:'Liberation Sans';letter-spacing:0.2px">4</div>
<div class="t" style="left:43px;top:84.2px;font-size:12.3px;color:#000;font-family:'Liberation Sans';letter-spacing:0.2px">4</div>
<div class="t" style="left:74px;top:84.2px;font-size:12.3px;color:#000;font-family:'Liberation Sans';letter-spacing:0.2px">TestTables</div>
<div class="t" style="left:164px;top:84.2px;font-size:12.3px;color:#000;font-family:'Liberation Sans';letter-spacing:0.2px">GF01</div>
<div class="t" style="left:240px;top:84.2px;font-size:12.3px;color:#000;font-family:'Liberation Sans';letter-spacing:0.1px">2024-10-16 11:43:00.0000000 +00:00</div>
<div class="t" style="left:464px;top:84.2px;font-size:12.3px;color:#000;font-family:'Liberation Sans';letter-spacing:0.1px">2024-10-16 11:44:00.0000000 +00:00</div>
<div class="t" style="left:688px;top:84.2px;font-size:12.3px;color:#000;font-family:'Liberation Sans';letter-spacing:0.2px">1</div>
<div class="t" style="left:771px;top:84.2px;font-size:12.3px;color:#000;font-family:'Liberation Sans';letter-spacing:0.2px">0</div>
<div class="t" style="left:833px;top:84.2px;font-size:12.3px;color:#000;font-family:'Liberation Sans';letter-spacing:0.2px">0</div>
<div class="t" style="left:927px;top:84.2px;font-size:12.3px;color:#000;font-family:'Liberation Sans';letter-spacing:0.2px">60</div>
<div class="t" style="left:1068px;top:84.2px;font-size:12.3px;color:#000;font-family:'Liberation Sans';letter-spacing:0.2px">sec</div>
<div class="t" style="left:1206px;top:84.2px;font-size:12.3px;color:#000;font-family:'Liberation Sans';letter-spacing:0.2px">60</div>
<div class="t" style="left:1342px;top:84.2px;font-size:12.3px;color:#000;font-family:'Liberation Sans';letter-spacing:0.2px">sec</div>
<div class="t" style="left:1475px;top:84.2px;font-size:12.3px;color:#000;font-family:'Liberation Sans';letter-spacing:0.2px">876.01</div>
<div class="t" style="left:1629px;top:84.2px;font-size:12.3px;color:#000;font-family:'Liberation Sans';letter-spacing:0.2px">kPa</div>
<div class="t" style="left:1781px;top:84.2px;font-size:12.3px;color:#000;font-family:'Liberation Sans';letter-spacing:0.2px">876.01</div>
<div class="a" style="left:0;top:119px;width:1829px;height:1px;background:#ececec"></div>
<div class="t" style="left:6px;top:104.9px;font-size:12.3px;color:#000;font-family:'Liberation Sans';letter-spacing:0.2px">5</div>
<div class="t" style="left:43px;top:104.2px;font-size:12.3px;color:#000;font-family:'Liberation Sans';letter-spacing:0.2px">5</div>
<div class="t" style="left:74px;top:104.2px;font-size:12.3px;color:#000;font-family:'Liberation Sans';letter-spacing:0.2px">TestTables</div>
<div class="t" style="left:164px;top:104.2px;font-size:12.3px;color:#000;font-family:'Liberation Sans';letter-spacing:0.2px">GF01</div>
<div class="t" style="left:240px;top:104.2px;font-size:12.3px;color:#000;font-family:'Liberation Sans';letter-spacing:0.1px">2024-10-16 11:44:00.0000000 +00:00</div>
<div class="t" style="left:464px;top:104.2px;font-size:12.3px;color:#000;font-family:'Liberation Sans';letter-spacing:0.1px">2024-10-16 11:45:00.0000000 +00:00</div>
<div class="t" style="left:688px;top:104.2px;font-size:12.3px;color:#000;font-family:'Liberation Sans';letter-spacing:0.2px">1</div>
<div class="t" style="left:771px;top:104.2px;font-size:12.3px;color:#000;font-family:'Liberation Sans';letter-spacing:0.2px">0</div>
<div class="t" style="left:833px;top:104.2px;font-size:12.3px;color:#000;font-family:'Liberation Sans';letter-spacing:0.2px">0</div>
<div class="t" style="left:927px;top:104.2px;font-size:12.3px;color:#000;font-family:'Liberation Sans';letter-spacing:0.2px">60</div>
<div class="t" style="left:1068px;top:104.2px;font-size:12.3px;color:#000;font-family:'Liberation Sans';letter-spacing:0.2px">sec</div>
<div class="t" style="left:1206px;top:104.2px;font-size:12.3px;color:#000;font-family:'Liberation Sans';letter-spacing:0.2px">60</div>
<div class="t" style="left:1342px;top:104.2px;font-size:12.3px;color:#000;font-family:'Liberation Sans';letter-spacing:0.2px">sec</div>
<div class="t" style="left:1475px;top:104.2px;font-size:12.3px;color:#000;font-family:'Liberation Sans';letter-spacing:0.2px">876.01</div>
<div class="t" style="left:1629px;top:104.2px;font-size:12.3px;color:#000;font-family:'Liberation Sans';letter-spacing:0.2px">kPa</div>
<div class="t" style="left:1781px;top:104.2px;font-size:12.3px;color:#000;font-family:'Liberation Sans';letter-spacing:0.2px">876.01</div>
<div class="a" style="left:0;top:139px;width:1829px;height:1px;background:#ececec"></div>
<div class="t" style="left:6px;top:124.9px;font-size:12.3px;color:#000;font-family:'Liberation Sans';letter-spacing:0.2px">6</div>
<div class="t" style="left:43px;top:124.2px;font-size:12.3px;color:#000;font-family:'Liberation Sans';letter-spacing:0.2px">6</div>
<div class="t" style="left:74px;top:124.2px;font-size:12.3px;color:#000;font-family:'Liberation Sans';letter-spacing:0.2px">TestTables</div>
<div class="t" style="left:164px;top:124.2px;font-size:12.3px;color:#000;font-family:'Liberation Sans';letter-spacing:0.2px">GF01</div>
<div class="t" style="left:240px;top:124.2px;font-size:12.3px;color:#000;font-family:'Liberation Sans';letter-spacing:0.1px">2024-10-16 11:45:00.0000000 +00:00</div>
<div class="t" style="left:464px;top:124.2px;font-size:12.3px;color:#000;font-family:'Liberation Sans';letter-spacing:0.1px">2024-10-16 11:46:00.0000000 +00:00</div>
<div class="t" style="left:688px;top:124.2px;font-size:12.3px;color:#000;font-family:'Liberation Sans';letter-spacing:0.2px">1</div>
<div class="t" style="left:771px;top:124.2px;font-size:12.3px;color:#000;font-family:'Liberation Sans';letter-spacing:0.2px">0</div>
<div class="t" style="left:833px;top:124.2px;font-size:12.3px;color:#000;font-family:'Liberation Sans';letter-spacing:0.2px">0</div>
<div class="t" style="left:927px;top:124.2px;font-size:12.3px;color:#000;font-family:'Liberation Sans';letter-spacing:0.2px">60</div>
<div class="t" style="left:1068px;top:124.2px;font-size:12.3px;color:#000;font-family:'Liberation Sans';letter-spacing:0.2px">sec</div>
<div class="t" style="left:1206px;top:124.2px;font-size:12.3px;color:#000;font-family:'Liberation Sans';letter-spacing:0.2px">60</div>
<div class="t" style="left:1342px;top:124.2px;font-size:12.3px;color:#000;font-family:'Liberation Sans';letter-spacing:0.2px">sec</div>
<div class="t" style="left:1475px;top:124.2px;font-size:12.3px;color:#000;font-family:'Liberation Sans';letter-spacing:0.2px">876.01</div>
<div class="t" style="left:1629px;top:124.2px;font-size:12.3px;color:#000;font-family:'Liberation Sans';letter-spacing:0.2px">kPa</div>
<div class="t" style="left:1781px;top:124.2px;font-size:12.3px;color:#000;font-family:'Liberation Sans';letter-spacing:0.2px">876.01</div>
<div class="a" style="left:0;top:159px;width:1829px;height:1px;background:#ececec"></div>
<div class="t" style="left:6px;top:144.9px;font-size:12.3px;color:#000;font-family:'Liberation Sans';letter-spacing:0.2px">7</div>
<div class="t" style="left:43px;top:144.2px;font-size:12.3px;color:#000;font-family:'Liberation Sans';letter-spacing:0.2px">7</div>
<div class="t" style="left:74px;top:144.2px;font-size:12.3px;color:#000;font-family:'Liberation Sans';letter-spacing:0.2px">TestTables</div>
<div class="t" style="left:164px;top:144.2px;font-size:12.3px;color:#000;font-family:'Liberation Sans';letter-spacing:0.2px">GF01</div>
<div class="t" style="left:240px;top:144.2px;font-size:12.3px;color:#000;font-family:'Liberation Sans';letter-spacing:0.1px">2024-10-16 11:46:00.0000000 +00:00</div>
<div class="t" style="left:464px;top:144.2px;font-size:12.3px;color:#000;font-family:'Liberation Sans';letter-spacing:0.1px">2024-10-16 11:46:15.0000000 +00:00</div>
<div class="t" style="left:688px;top:144.2px;font-size:12.3px;color:#000;font-family:'Liberation Sans';letter-spacing:0.2px">1</div>
<div class="t" style="left:771px;top:144.2px;font-size:12.3px;color:#000;font-family:'Liberation Sans';letter-spacing:0.2px">0</div>
<div class="t" style="left:833px;top:144.2px;font-size:12.3px;color:#000;font-family:'Liberation Sans';letter-spacing:0.2px">0</div>
<div class="t" style="left:927px;top:144.2px;font-size:12.3px;color:#000;font-family:'Liberation Sans';letter-spacing:0.2px">15</div>
<div class="t" style="left:1068px;top:144.2px;font-size:12.3px;color:#000;font-family:'Liberation Sans';letter-spacing:0.2px">sec</div>
<div class="t" style="left:1206px;top:144.2px;font-size:12.3px;color:#000;font-family:'Liberation Sans';letter-spacing:0.2px">15</div>
<div class="t" style="left:1342px;top:144.2px;font-size:12.3px;color:#000;font-family:'Liberation Sans';letter-spacing:0.2px">sec</div>
<div class="t" style="left:1475px;top:144.2px;font-size:12.3px;color:#000;font-family:'Liberation Sans';letter-spacing:0.2px">876.01</div>
<div class="t" style="left:1629px;top:144.2px;font-size:12.3px;color:#000;font-family:'Liberation Sans';letter-spacing:0.2px">kPa</div>
<div class="t" style="left:1781px;top:144.2px;font-size:12.3px;color:#000;font-family:'Liberation Sans';letter-spacing:0.2px">876.01</div>
<div class="a" style="left:0;top:179px;width:1829px;height:1px;background:#ececec"></div>
<div class="t" style="left:6px;top:164.9px;font-size:12.3px;color:#000;font-family:'Liberation Sans';letter-spacing:0.2px">8</div>
<div class="t" style="left:43px;top:164.2px;font-size:12.3px;color:#000;font-family:'Liberation Sans';letter-spacing:0.2px">8</div>
<div class="t" style="left:74px;top:164.2px;font-size:12.3px;color:#000;font-family:'Liberation Sans';letter-spacing:0.2px">TestTables</div>
<div class="t" style="left:164px;top:164.2px;font-size:12.3px;color:#000;font-family:'Liberation Sans';letter-spacing:0.2px">GF01</div>
<div class="t" style="left:240px;top:164.2px;font-size:12.3px;color:#000;font-family:'Liberation Sans';letter-spacing:0.1px">2024-10-16 11:46:15.0000000 +00:00</div>
<div class="t" style="left:464px;top:164.2px;font-size:12.3px;color:#000;font-family:'Liberation Sans';letter-spacing:0.1px">2024-10-16 11:47:00.0000000 +00:00</div>
<div class="t" style="left:688px;top:164.2px;font-size:12.3px;color:#000;font-family:'Liberation Sans';letter-spacing:0.2px">2</div>
<div class="t" style="left:771px;top:164.2px;font-size:12.3px;color:#000;font-family:'Liberation Sans';letter-spacing:0.2px">0</div>
<div class="t" style="left:833px;top:164.2px;font-size:12.3px;color:#000;font-family:'Liberation Sans';letter-spacing:0.2px">1</div>
<div class="t" style="left:927px;top:164.2px;font-size:12.3px;color:#000;font-family:'Liberation Sans';letter-spacing:0.2px">45</div>
<div class="t" style="left:1068px;top:164.2px;font-size:12.3px;color:#000;font-family:'Liberation Sans';letter-spacing:0.2px">sec</div>
<div class="t" style="left:1206px;top:164.2px;font-size:12.3px;color:#000;font-family:'Liberation Sans';letter-spacing:0.2px">45</div>
<div class="t" style="left:1342px;top:164.2px;font-size:12.3px;color:#000;font-family:'Liberation Sans';letter-spacing:0.2px">sec</div>
<div class="t" style="left:1475px;top:164.2px;font-size:12.3px;color:#000;font-family:'Liberation Sans';letter-spacing:0.2px">876.01</div>
<div class="t" style="left:1629px;top:164.2px;font-size:12.3px;color:#000;font-family:'Liberation Sans';letter-spacing:0.2px">kPa</div>
<div class="t" style="left:1781px;top:164.2px;font-size:12.3px;color:#000;font-family:'Liberation Sans';letter-spacing:0.2px">876.01</div>
<div class="a" style="left:0;top:199px;width:1829px;height:1px;background:#ececec"></div>
<div class="t" style="left:6px;top:184.9px;font-size:12.3px;color:#000;font-family:'Liberation Sans';letter-spacing:0.2px">9</div>
<div class="t" style="left:43px;top:184.2px;font-size:12.3px;color:#000;font-family:'Liberation Sans';letter-spacing:0.2px">9</div>
<div class="t" style="left:74px;top:184.2px;font-size:12.3px;color:#000;font-family:'Liberation Sans';letter-spacing:0.2px">TestTables</div>
<div class="t" style="left:164px;top:184.2px;font-size:12.3px;color:#000;font-family:'Liberation Sans';letter-spacing:0.2px">GF01</div>
<div class="t" style="left:240px;top:184.2px;font-size:12.3px;color:#000;font-family:'Liberation Sans';letter-spacing:0.1px">2024-10-16 11:47:00.0000000 +00:00</div>
<div class="t" style="left:464px;top:184.2px;font-size:12.3px;color:#000;font-family:'Liberation Sans';letter-spacing:0.1px">2024-10-16 11:48:00.0000000 +00:00</div>
<div class="t" style="left:688px;top:184.2px;font-size:12.3px;color:#000;font-family:'Liberation Sans';letter-spacing:0.2px">2</div>
<div class="t" style="left:771px;top:184.2px;font-size:12.3px;color:#000;font-family:'Liberation Sans';letter-spacing:0.2px">0</div>
<div class="t" style="left:833px;top:184.2px;font-size:12.3px;color:#000;font-family:'Liberation Sans';letter-spacing:0.2px">1</div>
<div class="t" style="left:927px;top:184.2px;font-size:12.3px;color:#000;font-family:'Liberation Sans';letter-spacing:0.2px">60</div>
<div class="t" style="left:1068px;top:184.2px;font-size:12.3px;color:#000;font-family:'Liberation Sans';letter-spacing:0.2px">sec</div>
<div class="t" style="left:1206px;top:184.2px;font-size:12.3px;color:#000;font-family:'Liberation Sans';letter-spacing:0.2px">60</div>
<div class="t" style="left:1342px;top:184.2px;font-size:12.3px;color:#000;font-family:'Liberation Sans';letter-spacing:0.2px">sec</div>
<div class="t" style="left:1475px;top:184.2px;font-size:12.3px;color:#000;font-family:'Liberation Sans';letter-spacing:0.2px">876.01</div>
<div class="t" style="left:1629px;top:184.2px;font-size:12.3px;color:#000;font-family:'Liberation Sans';letter-spacing:0.2px">kPa</div>
<div class="t" style="left:1781px;top:184.2px;font-size:12.3px;color:#000;font-family:'Liberation Sans';letter-spacing:0.2px">876.01</div>
<div class="a" style="left:0;top:219px;width:1829px;height:1px;background:#ececec"></div>
<div class="t" style="left:6px;top:204.9px;font-size:12.3px;color:#000;font-family:'Liberation Sans';letter-spacing:0.2px">10</div>
<div class="t" style="left:43px;top:204.2px;font-size:12.3px;color:#000;font-family:'Liberation Sans';letter-spacing:0.2px">10</div>
<div class="t" style="left:74px;top:204.2px;font-size:12.3px;color:#000;font-family:'Liberation Sans';letter-spacing:0.2px">TestTables</div>
<div class="t" style="left:164px;top:204.2px;font-size:12.3px;color:#000;font-family:'Liberation Sans';letter-spacing:0.2px">GF01</div>
<div class="t" style="left:240px;top:204.2px;font-size:12.3px;color:#000;font-family:'Liberation Sans';letter-spacing:0.1px">2024-10-16 11:48:00.0000000 +00:00</div>
<div class="t" style="left:464px;top:204.2px;font-size:12.3px;color:#000;font-family:'Liberation Sans';letter-spacing:0.1px">2024-10-16 11:49:00.0000000 +00:00</div>
<div class="t" style="left:688px;top:204.2px;font-size:12.3px;color:#000;font-family:'Liberation Sans';letter-spacing:0.2px">2</div>
<div class="t" style="left:771px;top:204.2px;font-size:12.3px;color:#000;font-family:'Liberation Sans';letter-spacing:0.2px">0</div>
<div class="t" style="left:833px;top:204.2px;font-size:12.3px;color:#000;font-family:'Liberation Sans';letter-spacing:0.2px">1</div>
<div class="t" style="left:927px;top:204.2px;font-size:12.3px;color:#000;font-family:'Liberation Sans';letter-spacing:0.2px">60</div>
<div class="t" style="left:1068px;top:204.2px;font-size:12.3px;color:#000;font-family:'Liberation Sans';letter-spacing:0.2px">sec</div>
<div class="t" style="left:1206px;top:204.2px;font-size:12.3px;color:#000;font-family:'Liberation Sans';letter-spacing:0.2px">60</div>
<div class="t" style="left:1342px;top:204.2px;font-size:12.3px;color:#000;font-family:'Liberation Sans';letter-spacing:0.2px">sec</div>
<div class="t" style="left:1475px;top:204.2px;font-size:12.3px;color:#000;font-family:'Liberation Sans';letter-spacing:0.2px">876.01</div>
<div class="t" style="left:1629px;top:204.2px;font-size:12.3px;color:#000;font-family:'Liberation Sans';letter-spacing:0.2px">kPa</div>
<div class="t" style="left:1781px;top:204.2px;font-size:12.3px;color:#000;font-family:'Liberation Sans';letter-spacing:0.2px">876.01</div>
<div class="a" style="left:0;top:239px;width:1829px;height:1px;background:#ececec"></div>
<div class="t" style="left:6px;top:224.9px;font-size:12.3px;color:#000;font-family:'Liberation Sans';letter-spacing:0.2px">11</div>
<div class="t" style="left:43px;top:224.2px;font-size:12.3px;color:#000;font-family:'Liberation Sans';letter-spacing:0.2px">11</div>
<div class="t" style="left:74px;top:224.2px;font-size:12.3px;color:#000;font-family:'Liberation Sans';letter-spacing:0.2px">TestTables</div>
<div class="t" style="left:164px;top:224.2px;font-size:12.3px;color:#000;font-family:'Liberation Sans';letter-spacing:0.2px">GF01</div>
<div class="t" style="left:240px;top:224.2px;font-size:12.3px;color:#000;font-family:'Liberation Sans';letter-spacing:0.1px">2024-10-16 11:49:00.0000000 +00:00</div>
<div class="t" style="left:464px;top:224.2px;font-size:12.3px;color:#000;font-family:'Liberation Sans';letter-spacing:0.1px">2024-10-16 11:50:00.0000000 +00:00</div>
<div class="t" style="left:688px;top:224.2px;font-size:12.3px;color:#000;font-family:'Liberation Sans';letter-spacing:0.2px">2</div>
<div class="t" style="left:771px;top:224.2px;font-size:12.3px;color:#000;font-family:'Liberation Sans';letter-spacing:0.2px">0</div>
<div class="t" style="left:833px;top:224.2px;font-size:12.3px;color:#000;font-family:'Liberation Sans';letter-spacing:0.2px">1</div>
<div class="t" style="left:927px;top:224.2px;font-size:12.3px;color:#000;font-family:'Liberation Sans';letter-spacing:0.2px">60</div>
<div class="t" style="left:1068px;top:224.2px;font-size:12.3px;color:#000;font-family:'Liberation Sans';letter-spacing:0.2px">sec</div>
<div class="t" style="left:1206px;top:224.2px;font-size:12.3px;color:#000;font-family:'Liberation Sans';letter-spacing:0.2px">60</div>
<div class="t" style="left:1342px;top:224.2px;font-size:12.3px;color:#000;font-family:'Liberation Sans';letter-spacing:0.2px">sec</div>
<div class="t" style="left:1475px;top:224.2px;font-size:12.3px;color:#000;font-family:'Liberation Sans';letter-spacing:0.2px">876.01</div>
<div class="t" style="left:1629px;top:224.2px;font-size:12.3px;color:#000;font-family:'Liberation Sans';letter-spacing:0.2px">kPa</div>
<div class="t" style="left:1781px;top:224.2px;font-size:12.3px;color:#000;font-family:'Liberation Sans';letter-spacing:0.2px">876.01</div>
<div class="a" style="left:0;top:259px;width:1829px;height:1px;background:#ececec"></div>
<div class="t" style="left:6px;top:244.9px;font-size:12.3px;color:#000;font-family:'Liberation Sans';letter-spacing:0.2px">12</div>
<div class="t" style="left:43px;top:244.2px;font-size:12.3px;color:#000;font-family:'Liberation Sans';letter-spacing:0.2px">12</div>
<div class="t" style="left:74px;top:244.2px;font-size:12.3px;color:#000;font-family:'Liberation Sans';letter-spacing:0.2px">TestTables</div>
<div class="t" style="left:164px;top:244.2px;font-size:12.3px;color:#000;font-family:'Liberation Sans';letter-spacing:0.2px">GF01</div>
<div class="t" style="left:240px;top:244.2px;font-size:12.3px;color:#000;font-family:'Liberation Sans';letter-spacing:0.1px">2024-10-16 11:50:00.0000000 +00:00</div>
<div class="t" style="left:464px;top:244.2px;font-size:12.3px;color:#000;font-family:'Liberation Sans';letter-spacing:0.1px">2024-10-16 11:51:00.0000000 +00:00</div>
<div class="t" style="left:688px;top:244.2px;font-size:12.3px;color:#000;font-family:'Liberation Sans';letter-spacing:0.2px">2</div>
<div class="t" style="left:771px;top:244.2px;font-size:12.3px;color:#000;font-family:'Liberation Sans';letter-spacing:0.2px">0</div>
<div class="t" style="left:833px;top:244.2px;font-size:12.3px;color:#000;font-family:'Liberation Sans';letter-spacing:0.2px">1</div>
<div class="t" style="left:927px;top:244.2px;font-size:12.3px;color:#000;font-family:'Liberation Sans';letter-spacing:0.2px">60</div>
<div class="t" style="left:1068px;top:244.2px;font-size:12.3px;color:#000;font-family:'Liberation Sans';letter-spacing:0.2px">sec</div>
<div class="t" style="left:1206px;top:244.2px;font-size:12.3px;color:#000;font-family:'Liberation Sans';letter-spacing:0.2px">60</div>
<div class="t" style="left:1342px;top:244.2px;font-size:12.3px;color:#000;font-family:'Liberation Sans';letter-spacing:0.2px">sec</div>
<div class="t" style="left:1475px;top:244.2px;font-size:12.3px;color:#000;font-family:'Liberation Sans';letter-spacing:0.2px">876.01</div>
<div class="t" style="left:1629px;top:244.2px;font-size:12.3px;color:#000;font-family:'Liberation Sans';letter-spacing:0.2px">kPa</div>
<div class="t" style="left:1781px;top:244.2px;font-size:12.3px;color:#000;font-family:'Liberation Sans';letter-spacing:0.2px">876.01</div>
<div class="a" style="left:0;top:279px;width:1829px;height:1px;background:#ececec"></div>
<div class="t" style="left:6px;top:264.9px;font-size:12.3px;color:#000;font-family:'Liberation Sans';letter-spacing:0.2px">13</div>
<div class="t" style="left:43px;top:264.2px;font-size:12.3px;color:#000;font-family:'Liberation Sans';letter-spacing:0.2px">13</div>
<div class="t" style="left:74px;top:264.2px;font-size:12.3px;color:#000;font-family:'Liberation Sans';letter-spacing:0.2px">TestTables</div>
<div class="t" style="left:164px;top:264.2px;font-size:12.3px;color:#000;font-family:'Liberation Sans';letter-spacing:0.2px">GF01</div>
<div class="t" style="left:240px;top:264.2px;font-size:12.3px;color:#000;font-family:'Liberation Sans';letter-spacing:0.1px">2024-10-16 11:51:00.0000000 +00:00</div>
<div class="t" style="left:464px;top:264.2px;font-size:12.3px;color:#000;font-family:'Liberation Sans';letter-spacing:0.1px">2024-10-16 11:52:00.0000000 +00:00</div>
<div class="t" style="left:688px;top:264.2px;font-size:12.3px;color:#000;font-family:'Liberation Sans';letter-spacing:0.2px">2</div>
<div class="t" style="left:771px;top:264.2px;font-size:12.3px;color:#000;font-family:'Liberation Sans';letter-spacing:0.2px">0</div>
<div class="t" style="left:833px;top:264.2px;font-size:12.3px;color:#000;font-family:'Liberation Sans';letter-spacing:0.2px">1</div>
<div class="t" style="left:927px;top:264.2px;font-size:12.3px;color:#000;font-family:'Liberation Sans';letter-spacing:0.2px">60</div>
<div class="t" style="left:1068px;top:264.2px;font-size:12.3px;color:#000;font-family:'Liberation Sans';letter-spacing:0.2px">sec</div>
<div class="t" style="left:1206px;top:264.2px;font-size:12.3px;color:#000;font-family:'Liberation Sans';letter-spacing:0.2px">60</div>
<div class="t" style="left:1342px;top:264.2px;font-size:12.3px;color:#000;font-family:'Liberation Sans';letter-spacing:0.2px">sec</div>
<div class="t" style="left:1475px;top:264.2px;font-size:12.3px;color:#000;font-family:'Liberation Sans';letter-spacing:0.2px">876.01</div>
<div class="t" style="left:1629px;top:264.2px;font-size:12.3px;color:#000;font-family:'Liberation Sans';letter-spacing:0.2px">kPa</div>
<div class="t" style="left:1781px;top:264.2px;font-size:12.3px;color:#000;font-family:'Liberation Sans';letter-spacing:0.2px">876.01</div>
<div class="a" style="left:0;top:299px;width:1829px;height:1px;background:#ececec"></div>
<div class="t" style="left:6px;top:284.9px;font-size:12.3px;color:#000;font-family:'Liberation Sans';letter-spacing:0.2px">14</div>
<div class="t" style="left:43px;top:284.2px;font-size:12.3px;color:#000;font-family:'Liberation Sans';letter-spacing:0.2px">14</div>
<div class="t" style="left:74px;top:284.2px;font-size:12.3px;color:#000;font-family:'Liberation Sans';letter-spacing:0.2px">TestTables</div>
<div class="t" style="left:164px;top:284.2px;font-size:12.3px;color:#000;font-family:'Liberation Sans';letter-spacing:0.2px">GF01</div>
<div class="t" style="left:240px;top:284.2px;font-size:12.3px;color:#000;font-family:'Liberation Sans';letter-spacing:0.1px">2024-10-16 11:52:00.0000000 +00:00</div>
<div class="t" style="left:464px;top:284.2px;font-size:12.3px;color:#000;font-family:'Liberation Sans';letter-spacing:0.1px">2024-10-16 11:53:00.0000000 +00:00</div>
<div class="t" style="left:688px;top:284.2px;font-size:12.3px;color:#000;font-family:'Liberation Sans';letter-spacing:0.2px">2</div>
<div class="t" style="left:771px;top:284.2px;font-size:12.3px;color:#000;font-family:'Liberation Sans';letter-spacing:0.2px">0</div>
<div class="t" style="left:833px;top:284.2px;font-size:12.3px;color:#000;font-family:'Liberation Sans';letter-spacing:0.2px">1</div>
<div class="t" style="left:927px;top:284.2px;font-size:12.3px;color:#000;font-family:'Liberation Sans';letter-spacing:0.2px">60</div>
<div class="t" style="left:1068px;top:284.2px;font-size:12.3px;color:#000;font-family:'Liberation Sans';letter-spacing:0.2px">sec</div>
<div class="t" style="left:1206px;top:284.2px;font-size:12.3px;color:#000;font-family:'Liberation Sans';letter-spacing:0.2px">60</div>
<div class="t" style="left:1342px;top:284.2px;font-size:12.3px;color:#000;font-family:'Liberation Sans';letter-spacing:0.2px">sec</div>
<div class="t" style="left:1475px;top:284.2px;font-size:12.3px;color:#000;font-family:'Liberation Sans';letter-spacing:0.2px">876.01</div>
<div class="t" style="left:1629px;top:284.2px;font-size:12.3px;color:#000;font-family:'Liberation Sans';letter-spacing:0.2px">kPa</div>
<div class="t" style="left:1781px;top:284.2px;font-size:12.3px;color:#000;font-family:'Liberation Sans';letter-spacing:0.2px">876.01</div>
<div class="a" style="left:0;top:319px;width:1829px;height:1px;background:#ececec"></div>
<div class="t" style="left:6px;top:304.9px;font-size:12.3px;color:#000;font-family:'Liberation Sans';letter-spacing:0.2px">15</div>
<div class="t" style="left:43px;top:304.2px;font-size:12.3px;color:#000;font-family:'Liberation Sans';letter-spacing:0.2px">15</div>
<div class="t" style="left:74px;top:304.2px;font-size:12.3px;color:#000;font-family:'Liberation Sans';letter-spacing:0.2px">TestTables</div>
<div class="t" style="left:164px;top:304.2px;font-size:12.3px;color:#000;font-family:'Liberation Sans';letter-spacing:0.2px">GF01</div>
<div class="t" style="left:240px;top:304.2px;font-size:12.3px;color:#000;font-family:'Liberation Sans';letter-spacing:0.1px">2024-10-16 11:53:00.0000000 +00:00</div>
<div class="t" style="left:464px;top:304.2px;font-size:12.3px;color:#000;font-family:'Liberation Sans';letter-spacing:0.1px">2024-10-16 11:54:00.0000000 +00:00</div>
<div class="t" style="left:688px;top:304.2px;font-size:12.3px;color:#000;font-family:'Liberation Sans';letter-spacing:0.2px">2</div>
<div class="t" style="left:771px;top:304.2px;font-size:12.3px;color:#000;font-family:'Liberation Sans';letter-spacing:0.2px">0</div>
<div class="t" style="left:833px;top:304.2px;font-size:12.3px;color:#000;font-family:'Liberation Sans';letter-spacing:0.2px">1</div>
<div class="t" style="left:927px;top:304.2px;font-size:12.3px;color:#000;font-family:'Liberation Sans';letter-spacing:0.2px">60</div>
<div class="t" style="left:1068px;top:304.2px;font-size:12.3px;color:#000;font-family:'Liberation Sans';letter-spacing:0.2px">sec</div>
<div class="t" style="left:1206px;top:304.2px;font-size:12.3px;color:#000;font-family:'Liberation Sans';letter-spacing:0.2px">60</div>
<div class="t" style="left:1342px;top:304.2px;font-size:12.3px;color:#000;font-family:'Liberation Sans';letter-spacing:0.2px">sec</div>
<div class="t" style="left:1475px;top:304.2px;font-size:12.3px;color:#000;font-family:'Liberation Sans';letter-spacing:0.2px">876.01</div>
<div class="t" style="left:1629px;top:304.2px;font-size:12.3px;color:#000;font-family:'Liberation Sans';letter-spacing:0.2px">kPa</div>
<div class="t" style="left:1781px;top:304.2px;font-size:12.3px;color:#000;font-family:'Liberation Sans';letter-spacing:0.2px">876.01</div>
<div class="a" style="left:0;top:339px;width:1829px;height:1px;background:#ececec"></div>
<div class="t" style="left:6px;top:324.9px;font-size:12.3px;color:#000;font-family:'Liberation Sans';letter-spacing:0.2px">16</div>
<div class="t" style="left:43px;top:324.2px;font-size:12.3px;color:#000;font-family:'Liberation Sans';letter-spacing:0.2px">16</div>
<div class="t" style="left:74px;top:324.2px;font-size:12.3px;color:#000;font-family:'Liberation Sans';letter-spacing:0.2px">TestTables</div>
<div class="t" style="left:164px;top:324.2px;font-size:12.3px;color:#000;font-family:'Liberation Sans';letter-spacing:0.2px">GF01</div>
<div class="t" style="left:240px;top:324.2px;font-size:12.3px;color:#000;font-family:'Liberation Sans';letter-spacing:0.1px">2024-10-16 11:54:00.0000000 +00:00</div>
<div class="t" style="left:464px;top:324.2px;font-size:12.3px;color:#000;font-family:'Liberation Sans';letter-spacing:0.1px">2024-10-16 11:55:00.0000000 +00:00</div>
<div class="t" style="left:688px;top:324.2px;font-size:12.3px;color:#000;font-family:'Liberation Sans';letter-spacing:0.2px">2</div>
<div class="t" style="left:771px;top:324.2px;font-size:12.3px;color:#000;font-family:'Liberation Sans';letter-spacing:0.2px">0</div>
<div class="t" style="left:833px;top:324.2px;font-size:12.3px;color:#000;font-family:'Liberation Sans';letter-spacing:0.2px">1</div>
<div class="t" style="left:927px;top:324.2px;font-size:12.3px;color:#000;font-family:'Liberation Sans';letter-spacing:0.2px">60</div>
<div class="t" style="left:1068px;top:324.2px;font-size:12.3px;color:#000;font-family:'Liberation Sans';letter-spacing:0.2px">sec</div>
<div class="t" style="left:1206px;top:324.2px;font-size:12.3px;color:#000;font-family:'Liberation Sans';letter-spacing:0.2px">60</div>
<div class="t" style="left:1342px;top:324.2px;font-size:12.3px;color:#000;font-family:'Liberation Sans';letter-spacing:0.2px">sec</div>
<div class="t" style="left:1475px;top:324.2px;font-size:12.3px;color:#000;font-family:'Liberation Sans';letter-spacing:0.2px">876.01</div>
<div class="t" style="left:1629px;top:324.2px;font-size:12.3px;color:#000;font-family:'Liberation Sans';letter-spacing:0.2px">kPa</div>
<div class="t" style="left:1781px;top:324.2px;font-size:12.3px;color:#000;font-family:'Liberation Sans';letter-spacing:0.2px">876.01</div>
<div class="a" style="left:0;top:359px;width:1829px;height:1px;background:#ececec"></div>
<div class="t" style="left:6px;top:344.9px;font-size:12.3px;color:#000;font-family:'Liberation Sans';letter-spacing:0.2px">17</div>
<div class="t" style="left:43px;top:344.2px;font-size:12.3px;color:#000;font-family:'Liberation Sans';letter-spacing:0.2px">17</div>
<div class="t" style="left:74px;top:344.2px;font-size:12.3px;color:#000;font-family:'Liberation Sans';letter-spacing:0.2px">TestTables</div>
<div class="t" style="left:164px;top:344.2px;font-size:12.3px;color:#000;font-family:'Liberation Sans';letter-spacing:0.2px">GF01</div>
<div class="t" style="left:240px;top:344.2px;font-size:12.3px;color:#000;font-family:'Liberation Sans';letter-spacing:0.1px">2024-10-16 11:55:00.0000000 +00:00</div>
<div class="t" style="left:464px;top:344.2px;font-size:12.3px;color:#000;font-family:'Liberation Sans';letter-spacing:0.1px">2024-10-16 11:56:00.0000000 +00:00</div>
<div class="t" style="left:688px;top:344.2px;font-size:12.3px;color:#000;font-family:'Liberation Sans';letter-spacing:0.2px">2</div>
<div class="t" style="left:771px;top:344.2px;font-size:12.3px;color:#000;font-family:'Liberation Sans';letter-spacing:0.2px">0</div>
<div class="t" style="left:833px;top:344.2px;font-size:12.3px;color:#000;font-family:'Liberation Sans';letter-spacing:0.2px">1</div>
<div class="t" style="left:927px;top:344.2px;font-size:12.3px;color:#000;font-family:'Liberation Sans';letter-spacing:0.2px">60</div>
<div class="t" style="left:1068px;top:344.2px;font-size:12.3px;color:#000;font-family:'Liberation Sans';letter-spacing:0.2px">sec</div>
<div class="t" style="left:1206px;top:344.2px;font-size:12.3px;color:#000;font-family:'Liberation Sans';letter-spacing:0.2px">60</div>
<div class="t" style="left:1342px;top:344.2px;font-size:12.3px;color:#000;font-family:'Liberation Sans';letter-spacing:0.2px">sec</div>
<div class="t" style="left:1475px;top:344.2px;font-size:12.3px;color:#000;font-family:'Liberation Sans';letter-spacing:0.2px">876.01</div>
<div class="t" style="left:1629px;top:344.2px;font-size:12.3px;color:#000;font-family:'Liberation Sans';letter-spacing:0.2px">kPa</div>
<div class="t" style="left:1781px;top:344.2px;font-size:12.3px;color:#000;font-family:'Liberation Sans';letter-spacing:0.2px">876.01</div>
<div class="a" style="left:0;top:379px;width:1829px;height:1px;background:#ececec"></div>
<div class="t" style="left:6px;top:364.9px;font-size:12.3px;color:#000;font-family:'Liberation Sans';letter-spacing:0.2px">18</div>
<div class="t" style="left:43px;top:364.2px;font-size:12.3px;color:#000;font-family:'Liberation Sans';letter-spacing:0.2px">18</div>
<div class="t" style="left:74px;top:364.2px;font-size:12.3px;color:#000;font-family:'Liberation Sans';letter-spacing:0.2px">TestTables</div>
<div class="t" style="left:164px;top:364.2px;font-size:12.3px;color:#000;font-family:'Liberation Sans';letter-spacing:0.2px">GF01</div>
<div class="t" style="left:240px;top:364.2px;font-size:12.3px;color:#000;font-family:'Liberation Sans';letter-spacing:0.1px">2024-10-16 11:56:00.0000000 +00:00</div>
<div class="t" style="left:464px;top:364.2px;font-size:12.3px;color:#000;font-family:'Liberation Sans';letter-spacing:0.1px">2024-10-16 11:57:00.0000000 +00:00</div>
<div class="t" style="left:688px;top:364.2px;font-size:12.3px;color:#000;font-family:'Liberation Sans';letter-spacing:0.2px">2</div>
<div class="t" style="left:771px;top:364.2px;font-size:12.3px;color:#000;font-family:'Liberation Sans';letter-spacing:0.2px">0</div>
<div class="t" style="left:833px;top:364.2px;font-size:12.3px;color:#000;font-family:'Liberation Sans';letter-spacing:0.2px">1</div>
<div class="t" style="left:927px;top:364.2px;font-size:12.3px;color:#000;font-family:'Liberation Sans';letter-spacing:0.2px">60</div>
<div class="t" style="left:1068px;top:364.2px;font-size:12.3px;color:#000;font-family:'Liberation Sans';letter-spacing:0.2px">sec</div>
<div class="t" style="left:1206px;top:364.2px;font-size:12.3px;color:#000;font-family:'Liberation Sans';letter-spacing:0.2px">60</div>
<div class="t" style="left:1342px;top:364.2px;font-size:12.3px;color:#000;font-family:'Liberation Sans';letter-spacing:0.2px">sec</div>
<div class="t" style="left:1475px;top:364.2px;font-size:12.3px;color:#000;font-family:'Liberation Sans';letter-spacing:0.2px">876.01</div>
<div class="t" style="left:1629px;top:364.2px;font-size:12.3px;color:#000;font-family:'Liberation Sans';letter-spacing:0.2px">kPa</div>
<div class="t" style="left:1781px;top:364.2px;font-size:12.3px;color:#000;font-family:'Liberation Sans';letter-spacing:0.2px">876.01</div>
<div class="a" style="left:0;top:399px;width:1829px;height:1px;background:#ececec"></div>
<div class="t" style="left:6px;top:384.9px;font-size:12.3px;color:#000;font-family:'Liberation Sans';letter-spacing:0.2px">19</div>
<div class="t" style="left:43px;top:384.2px;font-size:12.3px;color:#000;font-family:'Liberation Sans';letter-spacing:0.2px">19</div>
<div class="t" style="left:74px;top:384.2px;font-size:12.3px;color:#000;font-family:'Liberation Sans';letter-spacing:0.2px">TestTables</div>
<div class="t" style="left:164px;top:384.2px;font-size:12.3px;color:#000;font-family:'Liberation Sans';letter-spacing:0.2px">GF01</div>
<div class="t" style="left:240px;top:384.2px;font-size:12.3px;color:#000;font-family:'Liberation Sans';letter-spacing:0.1px">2024-10-16 11:57:00.0000000 +00:00</div>
<div class="t" style="left:464px;top:384.2px;font-size:12.3px;color:#000;font-family:'Liberation Sans';letter-spacing:0.1px">2024-10-16 11:58:00.0000000 +00:00</div>
<div class="t" style="left:688px;top:384.2px;font-size:12.3px;color:#000;font-family:'Liberation Sans';letter-spacing:0.2px">2</div>
<div class="t" style="left:771px;top:384.2px;font-size:12.3px;color:#000;font-family:'Liberation Sans';letter-spacing:0.2px">0</div>
<div class="t" style="left:833px;top:384.2px;font-size:12.3px;color:#000;font-family:'Liberation Sans';letter-spacing:0.2px">1</div>
<div class="t" style="left:927px;top:384.2px;font-size:12.3px;color:#000;font-family:'Liberation Sans';letter-spacing:0.2px">60</div>
<div class="t" style="left:1068px;top:384.2px;font-size:12.3px;color:#000;font-family:'Liberation Sans';letter-spacing:0.2px">sec</div>
<div class="t" style="left:1206px;top:384.2px;font-size:12.3px;color:#000;font-family:'Liberation Sans';letter-spacing:0.2px">60</div>
<div class="t" style="left:1342px;top:384.2px;font-size:12.3px;color:#000;font-family:'Liberation Sans';letter-spacing:0.2px">sec</div>
<div class="t" style="left:1475px;top:384.2px;font-size:12.3px;color:#000;font-family:'Liberation Sans';letter-spacing:0.2px">876.01</div>
<div class="t" style="left:1629px;top:384.2px;font-size:12.3px;color:#000;font-family:'Liberation Sans';letter-spacing:0.2px">kPa</div>
<div class="t" style="left:1781px;top:384.2px;font-size:12.3px;color:#000;font-family:'Liberation Sans';letter-spacing:0.2px">876.01</div>
<div class="a" style="left:0;top:419px;width:1829px;height:1px;background:#ececec"></div>
<div class="t" style="left:6px;top:404.9px;font-size:12.3px;color:#000;font-family:'Liberation Sans';letter-spacing:0.2px">20</div>
<div class="t" style="left:43px;top:404.2px;font-size:12.3px;color:#000;font-family:'Liberation Sans';letter-spacing:0.2px">20</div>
<div class="t" style="left:74px;top:404.2px;font-size:12.3px;color:#000;font-family:'Liberation Sans';letter-spacing:0.2px">TestTables</div>
<div class="t" style="left:164px;top:404.2px;font-size:12.3px;color:#000;font-family:'Liberation Sans';letter-spacing:0.2px">GF01</div>
<div class="t" style="left:240px;top:404.2px;font-size:12.3px;color:#000;font-family:'Liberation Sans';letter-spacing:0.1px">2024-10-16 11:58:00.0000000 +00:00</div>
<div class="t" style="left:464px;top:404.2px;font-size:12.3px;color:#000;font-family:'Liberation Sans';letter-spacing:0.1px">2024-10-16 11:59:00.0000000 +00:00</div>
<div class="t" style="left:688px;top:404.2px;font-size:12.3px;color:#000;font-family:'Liberation Sans';letter-spacing:0.2px">2</div>
<div class="t" style="left:771px;top:404.2px;font-size:12.3px;color:#000;font-family:'Liberation Sans';letter-spacing:0.2px">0</div>
<div class="t" style="left:833px;top:404.2px;font-size:12.3px;color:#000;font-family:'Liberation Sans';letter-spacing:0.2px">1</div>
<div class="t" style="left:927px;top:404.2px;font-size:12.3px;color:#000;font-family:'Liberation Sans';letter-spacing:0.2px">60</div>
<div class="t" style="left:1068px;top:404.2px;font-size:12.3px;color:#000;font-family:'Liberation Sans';letter-spacing:0.2px">sec</div>
<div class="t" style="left:1206px;top:404.2px;font-size:12.3px;color:#000;font-family:'Liberation Sans';letter-spacing:0.2px">60</div>
<div class="t" style="left:1342px;top:404.2px;font-size:12.3px;color:#000;font-family:'Liberation Sans';letter-spacing:0.2px">sec</div>
<div class="t" style="left:1475px;top:404.2px;font-size:12.3px;color:#000;font-family:'Liberation Sans';letter-spacing:0.2px">876.01</div>
<div class="t" style="left:1629px;top:404.2px;font-size:12.3px;color:#000;font-family:'Liberation Sans';letter-spacing:0.2px">kPa</div>
<div class="t" style="left:1781px;top:404.2px;font-size:12.3px;color:#000;font-family:'Liberation Sans';letter-spacing:0.2px">876.01</div>
<div class="a" style="left:0;top:439px;width:1829px;height:1px;background:#ececec"></div>
<div class="t" style="left:6px;top:424.9px;font-size:12.3px;color:#000;font-family:'Liberation Sans';letter-spacing:0.2px">21</div>
<div class="t" style="left:43px;top:424.2px;font-size:12.3px;color:#000;font-family:'Liberation Sans';letter-spacing:0.2px">21</div>
<div class="t" style="left:74px;top:424.2px;font-size:12.3px;color:#000;font-family:'Liberation Sans';letter-spacing:0.2px">TestTables</div>
<div class="t" style="left:164px;top:424.2px;font-size:12.3px;color:#000;font-family:'Liberation Sans';letter-spacing:0.2px">GF01</div>
<div class="t" style="left:240px;top:424.2px;font-size:12.3px;color:#000;font-family:'Liberation Sans';letter-spacing:0.1px">2024-10-16 11:59:00.0000000 +00:00</div>
<div class="t" style="left:464px;top:424.2px;font-size:12.3px;color:#000;font-family:'Liberation Sans';letter-spacing:0.1px">2024-10-16 12:00:00.0000000 +00:00</div>
<div class="t" style="left:688px;top:424.2px;font-size:12.3px;color:#000;font-family:'Liberation Sans';letter-spacing:0.2px">2</div>
<div class="t" style="left:771px;top:424.2px;font-size:12.3px;color:#000;font-family:'Liberation Sans';letter-spacing:0.2px">0</div>
<div class="t" style="left:833px;top:424.2px;font-size:12.3px;color:#000;font-family:'Liberation Sans';letter-spacing:0.2px">1</div>
<div class="t" style="left:927px;top:424.2px;font-size:12.3px;color:#000;font-family:'Liberation Sans';letter-spacing:0.2px">60</div>
<div class="t" style="left:1068px;top:424.2px;font-size:12.3px;color:#000;font-family:'Liberation Sans';letter-spacing:0.2px">sec</div>
<div class="t" style="left:1206px;top:424.2px;font-size:12.3px;color:#000;font-family:'Liberation Sans';letter-spacing:0.2px">60</div>
<div class="t" style="left:1342px;top:424.2px;font-size:12.3px;color:#000;font-family:'Liberation Sans';letter-spacing:0.2px">sec</div>
<div class="t" style="left:1475px;top:424.2px;font-size:12.3px;color:#000;font-family:'Liberation Sans';letter-spacing:0.2px">876.01</div>
<div class="t" style="left:1629px;top:424.2px;font-size:12.3px;color:#000;font-family:'Liberation Sans';letter-spacing:0.2px">kPa</div>
<div class="t" style="left:1781px;top:424.2px;font-size:12.3px;color:#000;font-family:'Liberation Sans';letter-spacing:0.2px">876.01</div>
<div class="a" style="left:0;top:459px;width:1829px;height:1px;background:#ececec"></div>
<div class="t" style="left:6px;top:444.9px;font-size:12.3px;color:#000;font-family:'Liberation Sans';letter-spacing:0.2px">22</div>
<div class="t" style="left:43px;top:444.2px;font-size:12.3px;color:#000;font-family:'Liberation Sans';letter-spacing:0.2px">22</div>
<div class="t" style="left:74px;top:444.2px;font-size:12.3px;color:#000;font-family:'Liberation Sans';letter-spacing:0.2px">TestTables</div>
<div class="t" style="left:164px;top:444.2px;font-size:12.3px;color:#000;font-family:'Liberation Sans';letter-spacing:0.2px">GF01</div>
<div class="t" style="left:240px;top:444.2px;font-size:12.3px;color:#000;font-family:'Liberation Sans';letter-spacing:0.1px">2024-10-16 12:00:00.0000000 +00:00</div>
<div class="t" style="left:464px;top:444.2px;font-size:12.3px;color:#000;font-family:'Liberation Sans';letter-spacing:0.1px">2024-10-16 12:01:00.0000000 +00:00</div>
<div class="t" style="left:688px;top:444.2px;font-size:12.3px;color:#000;font-family:'Liberation Sans';letter-spacing:0.2px">2</div>
<div class="t" style="left:771px;top:444.2px;font-size:12.3px;color:#000;font-family:'Liberation Sans';letter-spacing:0.2px">0</div>
<div class="t" style="left:833px;top:444.2px;font-size:12.3px;color:#000;font-family:'Liberation Sans';letter-spacing:0.2px">1</div>
<div class="t" style="left:927px;top:444.2px;font-size:12.3px;color:#000;font-family:'Liberation Sans';letter-spacing:0.2px">60</div>
<div class="t" style="left:1068px;top:444.2px;font-size:12.3px;color:#000;font-family:'Liberation Sans';letter-spacing:0.2px">sec</div>
<div class="t" style="left:1206px;top:444.2px;font-size:12.3px;color:#000;font-family:'Liberation Sans';letter-spacing:0.2px">60</div>
<div class="t" style="left:1342px;top:444.2px;font-size:12.3px;color:#000;font-family:'Liberation Sans';letter-spacing:0.2px">sec</div>
<div class="t" style="left:1475px;top:444.2px;font-size:12.3px;color:#000;font-family:'Liberation Sans';letter-spacing:0.2px">876.01</div>
<div class="t" style="left:1629px;top:444.2px;font-size:12.3px;color:#000;font-family:'Liberation Sans';letter-spacing:0.2px">kPa</div>
<div class="t" style="left:1781px;top:444.2px;font-size:12.3px;color:#000;font-family:'Liberation Sans';letter-spacing:0.2px">876.01</div>
<div class="a" style="left:0;top:479px;width:1829px;height:1px;background:#ececec"></div>
<div class="t" style="left:6px;top:464.9px;font-size:12.3px;color:#000;font-family:'Liberation Sans';letter-spacing:0.2px">23</div>
<div class="t" style="left:43px;top:464.2px;font-size:12.3px;color:#000;font-family:'Liberation Sans';letter-spacing:0.2px">23</div>
<div class="t" style="left:74px;top:464.2px;font-size:12.3px;color:#000;font-family:'Liberation Sans';letter-spacing:0.2px">TestTables</div>
<div class="t" style="left:164px;top:464.2px;font-size:12.3px;color:#000;font-family:'Liberation Sans';letter-spacing:0.2px">GF01</div>
<div class="t" style="left:240px;top:464.2px;font-size:12.3px;color:#000;font-family:'Liberation Sans';letter-spacing:0.1px">2024-10-16 12:01:00.0000000 +00:00</div>
<div class="t" style="left:464px;top:464.2px;font-size:12.3px;color:#000;font-family:'Liberation Sans';letter-spacing:0.1px">2024-10-16 12:02:00.0000000 +00:00</div>
<div class="t" style="left:688px;top:464.2px;font-size:12.3px;color:#000;font-family:'Liberation Sans';letter-spacing:0.2px">2</div>
<div class="t" style="left:771px;top:464.2px;font-size:12.3px;color:#000;font-family:'Liberation Sans';letter-spacing:0.2px">0</div>
<div class="t" style="left:833px;top:464.2px;font-size:12.3px;color:#000;font-family:'Liberation Sans';letter-spacing:0.2px">1</div>
<div class="t" style="left:927px;top:464.2px;font-size:12.3px;color:#000;font-family:'Liberation Sans';letter-spacing:0.2px">60</div>
<div class="t" style="left:1068px;top:464.2px;font-size:12.3px;color:#000;font-family:'Liberation Sans';letter-spacing:0.2px">sec</div>
<div class="t" style="left:1206px;top:464.2px;font-size:12.3px;color:#000;font-family:'Liberation Sans';letter-spacing:0.2px">60</div>
<div class="t" style="left:1342px;top:464.2px;font-size:12.3px;color:#000;font-family:'Liberation Sans';letter-spacing:0.2px">sec</div>
<div class="t" style="left:1475px;top:464.2px;font-size:12.3px;color:#000;font-family:'Liberation Sans';letter-spacing:0.2px">876.01</div>
<div class="t" style="left:1629px;top:464.2px;font-size:12.3px;color:#000;font-family:'Liberation Sans';letter-spacing:0.2px">kPa</div>
<div class="t" style="left:1781px;top:464.2px;font-size:12.3px;color:#000;font-family:'Liberation Sans';letter-spacing:0.2px">876.01</div>
<div class="a" style="left:0;top:499px;width:1829px;height:1px;background:#ececec"></div>
<div class="t" style="left:6px;top:484.9px;font-size:12.3px;color:#000;font-family:'Liberation Sans';letter-spacing:0.2px">24</div>
<div class="t" style="left:43px;top:484.2px;font-size:12.3px;color:#000;font-family:'Liberation Sans';letter-spacing:0.2px">24</div>
<div class="t" style="left:74px;top:484.2px;font-size:12.3px;color:#000;font-family:'Liberation Sans';letter-spacing:0.2px">TestTables</div>
<div class="t" style="left:164px;top:484.2px;font-size:12.3px;color:#000;font-family:'Liberation Sans';letter-spacing:0.2px">GF01</div>
<div class="t" style="left:240px;top:484.2px;font-size:12.3px;color:#000;font-family:'Liberation Sans';letter-spacing:0.1px">2024-10-16 12:02:00.0000000 +00:00</div>
<div class="t" style="left:464px;top:484.2px;font-size:12.3px;color:#000;font-family:'Liberation Sans';letter-spacing:0.1px">2024-10-16 12:03:00.0000000 +00:00</div>
<div class="t" style="left:688px;top:484.2px;font-size:12.3px;color:#000;font-family:'Liberation Sans';letter-spacing:0.2px">2</div>
<div class="t" style="left:771px;top:484.2px;font-size:12.3px;color:#000;font-family:'Liberation Sans';letter-spacing:0.2px">0</div>
<div class="t" style="left:833px;top:484.2px;font-size:12.3px;color:#000;font-family:'Liberation Sans';letter-spacing:0.2px">1</div>
<div class="t" style="left:927px;top:484.2px;font-size:12.3px;color:#000;font-family:'Liberation Sans';letter-spacing:0.2px">60</div>
<div class="t" style="left:1068px;top:484.2px;font-size:12.3px;color:#000;font-family:'Liberation Sans';letter-spacing:0.2px">sec</div>
<div class="t" style="left:1206px;top:484.2px;font-size:12.3px;color:#000;font-family:'Liberation Sans';letter-spacing:0.2px">60</div>
<div class="t" style="left:1342px;top:484.2px;font-size:12.3px;color:#000;font-family:'Liberation Sans';letter-spacing:0.2px">sec</div>
<div class="t" style="left:1475px;top:484.2px;font-size:12.3px;color:#000;font-family:'Liberation Sans';letter-spacing:0.2px">876.01</div>
<div class="t" style="left:1629px;top:484.2px;font-size:12.3px;color:#000;font-family:'Liberation Sans';letter-spacing:0.2px">kPa</div>
<div class="t" style="left:1781px;top:484.2px;font-size:12.3px;color:#000;font-family:'Liberation Sans';letter-spacing:0.2px">876.01</div>
<div class="a" style="left:0;top:519px;width:1829px;height:1px;background:#ececec"></div>
<div class="t" style="left:6px;top:504.9px;font-size:12.3px;color:#000;font-family:'Liberation Sans';letter-spacing:0.2px">25</div>
<div class="t" style="left:43px;top:504.2px;font-size:12.3px;color:#000;font-family:'Liberation Sans';letter-spacing:0.2px">25</div>
<div class="t" style="left:74px;top:504.2px;font-size:12.3px;color:#000;font-family:'Liberation Sans';letter-spacing:0.2px">TestTables</div>
<div class="t" style="left:164px;top:504.2px;font-size:12.3px;color:#000;font-family:'Liberation Sans';letter-spacing:0.2px">GF01</div>
<div class="t" style="left:240px;top:504.2px;font-size:12.3px;color:#000;font-family:'Liberation Sans';letter-spacing:0.1px">2024-10-16 12:03:00.0000000 +00:00</div>
<div class="t" style="left:464px;top:504.2px;font-size:12.3px;color:#000;font-family:'Liberation Sans';letter-spacing:0.1px">2024-10-16 12:04:00.0000000 +00:00</div>
<div class="t" style="left:688px;top:504.2px;font-size:12.3px;color:#000;font-family:'Liberation Sans';letter-spacing:0.2px">2</div>
<div class="t" style="left:771px;top:504.2px;font-size:12.3px;color:#000;font-family:'Liberation Sans';letter-spacing:0.2px">0</div>
<div class="t" style="left:833px;top:504.2px;font-size:12.3px;color:#000;font-family:'Liberation Sans';letter-spacing:0.2px">1</div>
<div class="t" style="left:927px;top:504.2px;font-size:12.3px;color:#000;font-family:'Liberation Sans';letter-spacing:0.2px">60</div>
<div class="t" style="left:1068px;top:504.2px;font-size:12.3px;color:#000;font-family:'Liberation Sans';letter-spacing:0.2px">sec</div>
<div class="t" style="left:1206px;top:504.2px;font-size:12.3px;color:#000;font-family:'Liberation Sans';letter-spacing:0.2px">60</div>
<div class="t" style="left:1342px;top:504.2px;font-size:12.3px;color:#000;font-family:'Liberation Sans';letter-spacing:0.2px">sec</div>
<div class="t" style="left:1475px;top:504.2px;font-size:12.3px;color:#000;font-family:'Liberation Sans';letter-spacing:0.2px">876.01</div>
<div class="t" style="left:1629px;top:504.2px;font-size:12.3px;color:#000;font-family:'Liberation Sans';letter-spacing:0.2px">kPa</div>
<div class="t" style="left:1781px;top:504.2px;font-size:12.3px;color:#000;font-family:'Liberation Sans';letter-spacing:0.2px">876.01</div>
<div class="a" style="left:0;top:539px;width:1829px;height:1px;background:#ececec"></div>
<div class="t" style="left:6px;top:524.9px;font-size:12.3px;color:#000;font-family:'Liberation Sans';letter-spacing:0.2px">26</div>
<div class="t" style="left:43px;top:524.2px;font-size:12.3px;color:#000;font-family:'Liberation Sans';letter-spacing:0.2px">26</div>
<div class="t" style="left:74px;top:524.2px;font-size:12.3px;color:#000;font-family:'Liberation Sans';letter-spacing:0.2px">TestTables</div>
<div class="t" style="left:164px;top:524.2px;font-size:12.3px;color:#000;font-family:'Liberation Sans';letter-spacing:0.2px">GF01</div>
<div class="t" style="left:240px;top:524.2px;font-size:12.3px;color:#000;font-family:'Liberation Sans';letter-spacing:0.1px">2024-10-16 12:04:00.0000000 +00:00</div>
<div class="t" style="left:464px;top:524.2px;font-size:12.3px;color:#000;font-family:'Liberation Sans';letter-spacing:0.1px">2024-10-16 12:05:00.0000000 +00:00</div>
<div class="t" style="left:688px;top:524.2px;font-size:12.3px;color:#000;font-family:'Liberation Sans';letter-spacing:0.2px">2</div>
<div class="t" style="left:771px;top:524.2px;font-size:12.3px;color:#000;font-family:'Liberation Sans';letter-spacing:0.2px">0</div>
<div class="t" style="left:833px;top:524.2px;font-size:12.3px;color:#000;font-family:'Liberation Sans';letter-spacing:0.2px">1</div>
<div class="t" style="left:927px;top:524.2px;font-size:12.3px;color:#000;font-family:'Liberation Sans';letter-spacing:0.2px">60</div>
<div class="t" style="left:1068px;top:524.2px;font-size:12.3px;color:#000;font-family:'Liberation Sans';letter-spacing:0.2px">sec</div>
<div class="t" style="left:1206px;top:524.2px;font-size:12.3px;color:#000;font-family:'Liberation Sans';letter-spacing:0.2px">60</div>
<div class="t" style="left:1342px;top:524.2px;font-size:12.3px;color:#000;font-family:'Liberation Sans';letter-spacing:0.2px">sec</div>
<div class="t" style="left:1475px;top:524.2px;font-size:12.3px;color:#000;font-family:'Liberation Sans';letter-spacing:0.2px">876.01</div>
<div class="t" style="left:1629px;top:524.2px;font-size:12.3px;color:#000;font-family:'Liberation Sans';letter-spacing:0.2px">kPa</div>
<div class="t" style="left:1781px;top:524.2px;font-size:12.3px;color:#000;font-family:'Liberation Sans';letter-spacing:0.2px">876.01</div>
<div class="a" style="left:0;top:559px;width:1829px;height:1px;background:#ececec"></div>
<div class="t" style="left:6px;top:544.9px;font-size:12.3px;color:#000;font-family:'Liberation Sans';letter-spacing:0.2px">27</div>
<div class="t" style="left:43px;top:544.2px;font-size:12.3px;color:#000;font-family:'Liberation Sans';letter-spacing:0.2px">27</div>
<div class="t" style="left:74px;top:544.2px;font-size:12.3px;color:#000;font-family:'Liberation Sans';letter-spacing:0.2px">TestTables</div>
<div class="t" style="left:164px;top:544.2px;font-size:12.3px;color:#000;font-family:'Liberation Sans';letter-spacing:0.2px">GF01</div>
<div class="t" style="left:240px;top:544.2px;font-size:12.3px;color:#000;font-family:'Liberation Sans';letter-spacing:0.1px">2024-10-16 12:05:00.0000000 +00:00</div>
<div class="t" style="left:464px;top:544.2px;font-size:12.3px;color:#000;font-family:'Liberation Sans';letter-spacing:0.1px">2024-10-16 12:06:00.0000000 +00:00</div>
<div class="t" style="left:688px;top:544.2px;font-size:12.3px;color:#000;font-family:'Liberation Sans';letter-spacing:0.2px">2</div>
<div class="t" style="left:771px;top:544.2px;font-size:12.3px;color:#000;font-family:'Liberation Sans';letter-spacing:0.2px">0</div>
<div class="t" style="left:833px;top:544.2px;font-size:12.3px;color:#000;font-family:'Liberation Sans';letter-spacing:0.2px">1</div>
<div class="t" style="left:927px;top:544.2px;font-size:12.3px;color:#000;font-family:'Liberation Sans';letter-spacing:0.2px">60</div>
<div class="t" style="left:1068px;top:544.2px;font-size:12.3px;color:#000;font-family:'Liberation Sans';letter-spacing:0.2px">sec</div>
<div class="t" style="left:1206px;top:544.2px;font-size:12.3px;color:#000;font-family:'Liberation Sans';letter-spacing:0.2px">60</div>
<div class="t" style="left:1342px;top:544.2px;font-size:12.3px;color:#000;font-family:'Liberation Sans';letter-spacing:0.2px">sec</div>
<div class="t" style="left:1475px;top:544.2px;font-size:12.3px;color:#000;font-family:'Liberation Sans';letter-spacing:0.2px">876.01</div>
<div class="t" style="left:1629px;top:544.2px;font-size:12.3px;color:#000;font-family:'Liberation Sans';letter-spacing:0.2px">kPa</div>
<div class="t" style="left:1781px;top:544.2px;font-size:12.3px;color:#000;font-family:'Liberation Sans';letter-spacing:0.2px">876.01</div>
<div class="a" style="left:0;top:579px;width:1829px;height:1px;background:#ececec"></div>
<div class="t" style="left:6px;top:564.9px;font-size:12.3px;color:#000;font-family:'Liberation Sans';letter-spacing:0.2px">28</div>
<div class="t" style="left:43px;top:564.2px;font-size:12.3px;color:#000;font-family:'Liberation Sans';letter-spacing:0.2px">28</div>
<div class="t" style="left:74px;top:564.2px;font-size:12.3px;color:#000;font-family:'Liberation Sans';letter-spacing:0.2px">TestTables</div>
<div class="t" style="left:164px;top:564.2px;font-size:12.3px;color:#000;font-family:'Liberation Sans';letter-spacing:0.2px">GF01</div>
<div class="t" style="left:240px;top:564.2px;font-size:12.3px;color:#000;font-family:'Liberation Sans';letter-spacing:0.1px">2024-10-16 12:06:00.0000000 +00:00</div>
<div class="t" style="left:464px;top:564.2px;font-size:12.3px;color:#000;font-family:'Liberation Sans';letter-spacing:0.1px">2024-10-16 12:07:00.0000000 +00:00</div>
<div class="t" style="left:688px;top:564.2px;font-size:12.3px;color:#000;font-family:'Liberation Sans';letter-spacing:0.2px">2</div>
<div class="t" style="left:771px;top:564.2px;font-size:12.3px;color:#000;font-family:'Liberation Sans';letter-spacing:0.2px">0</div>
<div class="t" style="left:833px;top:564.2px;font-size:12.3px;color:#000;font-family:'Liberation Sans';letter-spacing:0.2px">1</div>
<div class="t" style="left:927px;top:564.2px;font-size:12.3px;color:#000;font-family:'Liberation Sans';letter-spacing:0.2px">60</div>
<div class="t" style="left:1068px;top:564.2px;font-size:12.3px;color:#000;font-family:'Liberation Sans';letter-spacing:0.2px">sec</div>
<div class="t" style="left:1206px;top:564.2px;font-size:12.3px;color:#000;font-family:'Liberation Sans';letter-spacing:0.2px">60</div>
<div class="t" style="left:1342px;top:564.2px;font-size:12.3px;color:#000;font-family:'Liberation Sans';letter-spacing:0.2px">sec</div>
<div class="t" style="left:1475px;top:564.2px;font-size:12.3px;color:#000;font-family:'Liberation Sans';letter-spacing:0.2px">876.01</div>
<div class="t" style="left:1629px;top:564.2px;font-size:12.3px;color:#000;font-family:'Liberation Sans';letter-spacing:0.2px">kPa</div>
<div class="t" style="left:1781px;top:564.2px;font-size:12.3px;color:#000;font-family:'Liberation Sans';letter-spacing:0.2px">876.01</div>
<div class="a" style="left:0;top:599px;width:1829px;height:1px;background:#ececec"></div>
<div class="t" style="left:6px;top:584.9px;font-size:12.3px;color:#000;font-family:'Liberation Sans';letter-spacing:0.2px">29</div>
<div class="t" style="left:43px;top:584.2px;font-size:12.3px;color:#000;font-family:'Liberation Sans';letter-spacing:0.2px">29</div>
<div class="t" style="left:74px;top:584.2px;font-size:12.3px;color:#000;font-family:'Liberation Sans';letter-spacing:0.2px">TestTables</div>
<div class="t" style="left:164px;top:584.2px;font-size:12.3px;color:#000;font-family:'Liberation Sans';letter-spacing:0.2px">GF01</div>
<div class="t" style="left:240px;top:584.2px;font-size:12.3px;color:#000;font-family:'Liberation Sans';letter-spacing:0.1px">2024-10-16 12:07:00.0000000 +00:00</div>
<div class="t" style="left:464px;top:584.2px;font-size:12.3px;color:#000;font-family:'Liberation Sans';letter-spacing:0.1px">2024-10-16 12:08:00.0000000 +00:00</div>
<div class="t" style="left:688px;top:584.2px;font-size:12.3px;color:#000;font-family:'Liberation Sans';letter-spacing:0.2px">2</div>
<div class="t" style="left:771px;top:584.2px;font-size:12.3px;color:#000;font-family:'Liberation Sans';letter-spacing:0.2px">0</div>
<div class="t" style="left:833px;top:584.2px;font-size:12.3px;color:#000;font-family:'Liberation Sans';letter-spacing:0.2px">1</div>
<div class="t" style="left:927px;top:584.2px;font-size:12.3px;color:#000;font-family:'Liberation Sans';letter-spacing:0.2px">60</div>
<div class="t" style="left:1068px;top:584.2px;font-size:12.3px;color:#000;font-family:'Liberation Sans';letter-spacing:0.2px">sec</div>
<div class="t" style="left:1206px;top:584.2px;font-size:12.3px;color:#000;font-family:'Liberation Sans';letter-spacing:0.2px">60</div>
<div class="t" style="left:1342px;top:584.2px;font-size:12.3px;color:#000;font-family:'Liberation Sans';letter-spacing:0.2px">sec</div>
<div class="t" style="left:1475px;top:584.2px;font-size:12.3px;color:#000;font-family:'Liberation Sans';letter-spacing:0.2px">876.01</div>
<div class="t" style="left:1629px;top:584.2px;font-size:12.3px;color:#000;font-family:'Liberation Sans';letter-spacing:0.2px">kPa</div>
<div class="t" style="left:1781px;top:584.2px;font-size:12.3px;color:#000;font-family:'Liberation Sans';letter-spacing:0.2px">876.01</div>
<div class="a" style="left:0;top:619px;width:1829px;height:1px;background:#ececec"></div>
<div class="t" style="left:6px;top:604.9px;font-size:12.3px;color:#000;font-family:'Liberation Sans';letter-spacing:0.2px">30</div>
<div class="t" style="left:43px;top:604.2px;font-size:12.3px;color:#000;font-family:'Liberation Sans';letter-spacing:0.2px">30</div>
<div class="t" style="left:74px;top:604.2px;font-size:12.3px;color:#000;font-family:'Liberation Sans';letter-spacing:0.2px">TestTables</div>
<div class="t" style="left:164px;top:604.2px;font-size:12.3px;color:#000;font-family:'Liberation Sans';letter-spacing:0.2px">GF01</div>
<div class="t" style="left:240px;top:604.2px;font-size:12.3px;color:#000;font-family:'Liberation Sans';letter-spacing:0.1px">2024-10-16 12:08:00.0000000 +00:00</div>
<div class="t" style="left:464px;top:604.2px;font-size:12.3px;color:#000;font-family:'Liberation Sans';letter-spacing:0.1px">2024-10-16 12:09:00.0000000 +00:00</div>
<div class="t" style="left:688px;top:604.2px;font-size:12.3px;color:#000;font-family:'Liberation Sans';letter-spacing:0.2px">2</div>
<div class="t" style="left:771px;top:604.2px;font-size:12.3px;color:#000;font-family:'Liberation Sans';letter-spacing:0.2px">0</div>
<div class="t" style="left:833px;top:604.2px;font-size:12.3px;color:#000;font-family:'Liberation Sans';letter-spacing:0.2px">1</div>
<div class="t" style="left:927px;top:604.2px;font-size:12.3px;color:#000;font-family:'Liberation Sans';letter-spacing:0.2px">60</div>
<div class="t" style="left:1068px;top:604.2px;font-size:12.3px;color:#000;font-family:'Liberation Sans';letter-spacing:0.2px">sec</div>
<div class="t" style="left:1206px;top:604.2px;font-size:12.3px;color:#000;font-family:'Liberation Sans';letter-spacing:0.2px">60</div>
<div class="t" style="left:1342px;top:604.2px;font-size:12.3px;color:#000;font-family:'Liberation Sans';letter-spacing:0.2px">sec</div>
<div class="t" style="left:1475px;top:604.2px;font-size:12.3px;color:#000;font-family:'Liberation Sans';letter-spacing:0.2px">876.01</div>
<div class="t" style="left:1629px;top:604.2px;font-size:12.3px;color:#000;font-family:'Liberation Sans';letter-spacing:0.2px">kPa</div>
<div class="t" style="left:1781px;top:604.2px;font-size:12.3px;color:#000;font-family:'Liberation Sans';letter-spacing:0.2px">876.01</div>
<div class="a" style="left:0;top:639px;width:1829px;height:1px;background:#ececec"></div>
<div class="t" style="left:6px;top:624.9px;font-size:12.3px;color:#000;font-family:'Liberation Sans';letter-spacing:0.2px">31</div>
<div class="t" style="left:43px;top:624.2px;font-size:12.3px;color:#000;font-family:'Liberation Sans';letter-spacing:0.2px">31</div>
<div class="t" style="left:74px;top:624.2px;font-size:12.3px;color:#000;font-family:'Liberation Sans';letter-spacing:0.2px">TestTables</div>
<div class="t" style="left:164px;top:624.2px;font-size:12.3px;color:#000;font-family:'Liberation Sans';letter-spacing:0.2px">GF01</div>
<div class="t" style="left:240px;top:624.2px;font-size:12.3px;color:#000;font-family:'Liberation Sans';letter-spacing:0.1px">2024-10-16 12:09:00.0000000 +00:00</div>
<div class="t" style="left:464px;top:624.2px;font-size:12.3px;color:#000;font-family:'Liberation Sans';letter-spacing:0.1px">2024-10-16 12:10:00.0000000 +00:00</div>
<div class="t" style="left:688px;top:624.2px;font-size:12.3px;color:#000;font-family:'Liberation Sans';letter-spacing:0.2px">2</div>
<div class="t" style="left:771px;top:624.2px;font-size:12.3px;color:#000;font-family:'Liberation Sans';letter-spacing:0.2px">0</div>
<div class="t" style="left:833px;top:624.2px;font-size:12.3px;color:#000;font-family:'Liberation Sans';letter-spacing:0.2px">1</div>
<div class="t" style="left:927px;top:624.2px;font-size:12.3px;color:#000;font-family:'Liberation Sans';letter-spacing:0.2px">60</div>
<div class="t" style="left:1068px;top:624.2px;font-size:12.3px;color:#000;font-family:'Liberation Sans';letter-spacing:0.2px">sec</div>
<div class="t" style="left:1206px;top:624.2px;font-size:12.3px;color:#000;font-family:'Liberation Sans';letter-spacing:0.2px">60</div>
<div class="t" style="left:1342px;top:624.2px;font-size:12.3px;color:#000;font-family:'Liberation Sans';letter-spacing:0.2px">sec</div>
<div class="t" style="left:1475px;top:624.2px;font-size:12.3px;color:#000;font-family:'Liberation Sans';letter-spacing:0.2px">876.01</div>
<div class="t" style="left:1629px;top:624.2px;font-size:12.3px;color:#000;font-family:'Liberation Sans';letter-spacing:0.2px">kPa</div>
<div class="t" style="left:1781px;top:624.2px;font-size:12.3px;color:#000;font-family:'Liberation Sans';letter-spacing:0.2px">876.01</div>
<div class="a" style="left:0;top:659px;width:1829px;height:1px;background:#ececec"></div>
<div class="t" style="left:6px;top:644.9px;font-size:12.3px;color:#000;font-family:'Liberation Sans';letter-spacing:0.2px">32</div>
<div class="t" style="left:43px;top:644.2px;font-size:12.3px;color:#000;font-family:'Liberation Sans';letter-spacing:0.2px">32</div>
<div class="t" style="left:74px;top:644.2px;font-size:12.3px;color:#000;font-family:'Liberation Sans';letter-spacing:0.2px">TestTables</div>
<div class="t" style="left:164px;top:644.2px;font-size:12.3px;color:#000;font-family:'Liberation Sans';letter-spacing:0.2px">GF01</div>
<div class="t" style="left:240px;top:644.2px;font-size:12.3px;color:#000;font-family:'Liberation Sans';letter-spacing:0.1px">2024-10-16 12:10:00.0000000 +00:00</div>
<div class="t" style="left:464px;top:644.2px;font-size:12.3px;color:#000;font-family:'Liberation Sans';letter-spacing:0.1px">2024-10-16 12:11:00.0000000 +00:00</div>
<div class="t" style="left:688px;top:644.2px;font-size:12.3px;color:#000;font-family:'Liberation Sans';letter-spacing:0.2px">2</div>
<div class="t" style="left:771px;top:644.2px;font-size:12.3px;color:#000;font-family:'Liberation Sans';letter-spacing:0.2px">0</div>
<div class="t" style="left:833px;top:644.2px;font-size:12.3px;color:#000;font-family:'Liberation Sans';letter-spacing:0.2px">1</div>
<div class="t" style="left:927px;top:644.2px;font-size:12.3px;color:#000;font-family:'Liberation Sans';letter-spacing:0.2px">60</div>
<div class="t" style="left:1068px;top:644.2px;font-size:12.3px;color:#000;font-family:'Liberation Sans';letter-spacing:0.2px">sec</div>
<div class="t" style="left:1206px;top:644.2px;font-size:12.3px;color:#000;font-family:'Liberation Sans';letter-spacing:0.2px">60</div>
<div class="t" style="left:1342px;top:644.2px;font-size:12.3px;color:#000;font-family:'Liberation Sans';letter-spacing:0.2px">sec</div>
<div class="t" style="left:1475px;top:644.2px;font-size:12.3px;color:#000;font-family:'Liberation Sans';letter-spacing:0.2px">876.01</div>
<div class="t" style="left:1629px;top:644.2px;font-size:12.3px;color:#000;font-family:'Liberation Sans';letter-spacing:0.2px">kPa</div>
<div class="t" style="left:1781px;top:644.2px;font-size:12.3px;color:#000;font-family:'Liberation Sans';letter-spacing:0.2px">876.01</div>
<div class="a" style="left:0;top:679px;width:1829px;height:1px;background:#ececec"></div>
<div class="t" style="left:6px;top:664.9px;font-size:12.3px;color:#000;font-family:'Liberation Sans';letter-spacing:0.2px">33</div>
<div class="t" style="left:43px;top:664.2px;font-size:12.3px;color:#000;font-family:'Liberation Sans';letter-spacing:0.2px">33</div>
<div class="t" style="left:74px;top:664.2px;font-size:12.3px;color:#000;font-family:'Liberation Sans';letter-spacing:0.2px">TestTables</div>
<div class="t" style="left:164px;top:664.2px;font-size:12.3px;color:#000;font-family:'Liberation Sans';letter-spacing:0.2px">GF01</div>
<div class="t" style="left:240px;top:664.2px;font-size:12.3px;color:#000;font-family:'Liberation Sans';letter-spacing:0.1px">2024-10-16 12:11:00.0000000 +00:00</div>
<div class="t" style="left:464px;top:664.2px;font-size:12.3px;color:#000;font-family:'Liberation Sans';letter-spacing:0.1px">2024-10-16 12:12:00.0000000 +00:00</div>
<div class="t" style="left:688px;top:664.2px;font-size:12.3px;color:#000;font-family:'Liberation Sans';letter-spacing:0.2px">2</div>
<div class="t" style="left:771px;top:664.2px;font-size:12.3px;color:#000;font-family:'Liberation Sans';letter-spacing:0.2px">0</div>
<div class="t" style="left:833px;top:664.2px;font-size:12.3px;color:#000;font-family:'Liberation Sans';letter-spacing:0.2px">1</div>
<div class="t" style="left:927px;top:664.2px;font-size:12.3px;color:#000;font-family:'Liberation Sans';letter-spacing:0.2px">60</div>
<div class="t" style="left:1068px;top:664.2px;font-size:12.3px;color:#000;font-family:'Liberation Sans';letter-spacing:0.2px">sec</div>
<div class="t" style="left:1206px;top:664.2px;font-size:12.3px;color:#000;font-family:'Liberation Sans';letter-spacing:0.2px">60</div>
<div class="t" style="left:1342px;top:664.2px;font-size:12.3px;color:#000;font-family:'Liberation Sans';letter-spacing:0.2px">sec</div>
<div class="t" style="left:1475px;top:664.2px;font-size:12.3px;color:#000;font-family:'Liberation Sans';letter-spacing:0.2px">876.01</div>
<div class="t" style="left:1629px;top:664.2px;font-size:12.3px;color:#000;font-family:'Liberation Sans';letter-spacing:0.2px">kPa</div>
<div class="t" style="left:1781px;top:664.2px;font-size:12.3px;color:#000;font-family:'Liberation Sans';letter-spacing:0.2px">876.01</div>
<div class="a" style="left:0;top:699px;width:1829px;height:1px;background:#ececec"></div>
<div class="t" style="left:6px;top:684.9px;font-size:12.3px;color:#000;font-family:'Liberation Sans';letter-spacing:0.2px">34</div>
<div class="t" style="left:43px;top:684.2px;font-size:12.3px;color:#000;font-family:'Liberation Sans';letter-spacing:0.2px">34</div>
<div class="t" style="left:74px;top:684.2px;font-size:12.3px;color:#000;font-family:'Liberation Sans';letter-spacing:0.2px">TestTables</div>
<div class="t" style="left:164px;top:684.2px;font-size:12.3px;color:#000;font-family:'Liberation Sans';letter-spacing:0.2px">GF01</div>
<div class="t" style="left:240px;top:684.2px;font-size:12.3px;color:#000;font-family:'Liberation Sans';letter-spacing:0.1px">2024-10-16 12:12:00.0000000 +00:00</div>
<div class="t" style="left:464px;top:684.2px;font-size:12.3px;color:#000;font-family:'Liberation Sans';letter-spacing:0.1px">2024-10-16 12:13:00.0000000 +00:00</div>
<div class="t" style="left:688px;top:684.2px;font-size:12.3px;color:#000;font-family:'Liberation Sans';letter-spacing:0.2px">2</div>
<div class="t" style="left:771px;top:684.2px;font-size:12.3px;color:#000;font-family:'Liberation Sans';letter-spacing:0.2px">0</div>
<div class="t" style="left:833px;top:684.2px;font-size:12.3px;color:#000;font-family:'Liberation Sans';letter-spacing:0.2px">1</div>
<div class="t" style="left:927px;top:684.2px;font-size:12.3px;color:#000;font-family:'Liberation Sans';letter-spacing:0.2px">60</div>
<div class="t" style="left:1068px;top:684.2px;font-size:12.3px;color:#000;font-family:'Liberation Sans';letter-spacing:0.2px">sec</div>
<div class="t" style="left:1206px;top:684.2px;font-size:12.3px;color:#000;font-family:'Liberation Sans';letter-spacing:0.2px">60</div>
<div class="t" style="left:1342px;top:684.2px;font-size:12.3px;color:#000;font-family:'Liberation Sans';letter-spacing:0.2px">sec</div>
<div class="t" style="left:1475px;top:684.2px;font-size:12.3px;color:#000;font-family:'Liberation Sans';letter-spacing:0.2px">876.01</div>
<div class="t" style="left:1629px;top:684.2px;font-size:12.3px;color:#000;font-family:'Liberation Sans';letter-spacing:0.2px">kPa</div>
<div class="t" style="left:1781px;top:684.2px;font-size:12.3px;color:#000;font-family:'Liberation Sans';letter-spacing:0.2px">876.01</div>
<div class="a" style="left:0;top:719px;width:1829px;height:1px;background:#ececec"></div>
<div class="t" style="left:6px;top:704.9px;font-size:12.3px;color:#000;font-family:'Liberation Sans';letter-spacing:0.2px">35</div>
<div class="t" style="left:43px;top:704.2px;font-size:12.3px;color:#000;font-family:'Liberation Sans';letter-spacing:0.2px">35</div>
<div class="t" style="left:74px;top:704.2px;font-size:12.3px;color:#000;font-family:'Liberation Sans';letter-spacing:0.2px">TestTables</div>
<div class="t" style="left:164px;top:704.2px;font-size:12.3px;color:#000;font-family:'Liberation Sans';letter-spacing:0.2px">GF01</div>
<div class="t" style="left:240px;top:704.2px;font-size:12.3px;color:#000;font-family:'Liberation Sans';letter-spacing:0.1px">2024-10-16 12:13:00.0000000 +00:00</div>
<div class="t" style="left:464px;top:704.2px;font-size:12.3px;color:#000;font-family:'Liberation Sans';letter-spacing:0.1px">2024-10-16 12:13:14.0000000 +00:00</div>
<div class="t" style="left:688px;top:704.2px;font-size:12.3px;color:#000;font-family:'Liberation Sans';letter-spacing:0.2px">2</div>
<div class="t" style="left:771px;top:704.2px;font-size:12.3px;color:#000;font-family:'Liberation Sans';letter-spacing:0.2px">0</div>
<div class="t" style="left:833px;top:704.2px;font-size:12.3px;color:#000;font-family:'Liberation Sans';letter-spacing:0.2px">1</div>
<div class="t" style="left:927px;top:704.2px;font-size:12.3px;color:#000;font-family:'Liberation Sans';letter-spacing:0.2px">14</div>
<div class="t" style="left:1068px;top:704.2px;font-size:12.3px;color:#000;font-family:'Liberation Sans';letter-spacing:0.2px">sec</div>
<div class="t" style="left:1206px;top:704.2px;font-size:12.3px;color:#000;font-family:'Liberation Sans';letter-spacing:0.2px">14</div>
<div class="t" style="left:1342px;top:704.2px;font-size:12.3px;color:#000;font-family:'Liberation Sans';letter-spacing:0.2px">sec</div>
<div class="t" style="left:1475px;top:704.2px;font-size:12.3px;color:#000;font-family:'Liberation Sans';letter-spacing:0.2px">876.01</div>
<div class="t" style="left:1629px;top:704.2px;font-size:12.3px;color:#000;font-family:'Liberation Sans';letter-spacing:0.2px">kPa</div>
<div class="t" style="left:1781px;top:704.2px;font-size:12.3px;color:#000;font-family:'Liberation Sans';letter-spacing:0.2px">876.01</div>
<div class="a" style="left:0;top:739px;width:1829px;height:1px;background:#ececec"></div>
<div class="t" style="left:6px;top:724.9px;font-size:12.3px;color:#000;font-family:'Liberation Sans';letter-spacing:0.2px">36</div>
<div class="t" style="left:43px;top:724.2px;font-size:12.3px;color:#000;font-family:'Liberation Sans';letter-spacing:0.2px">36</div>
<div class="t" style="left:74px;top:724.2px;font-size:12.3px;color:#000;font-family:'Liberation Sans';letter-spacing:0.2px">TestTables</div>
<div class="t" style="left:164px;top:724.2px;font-size:12.3px;color:#000;font-family:'Liberation Sans';letter-spacing:0.2px">GF01</div>
<div class="t" style="left:240px;top:724.2px;font-size:12.3px;color:#000;font-family:'Liberation Sans';letter-spacing:0.1px">2024-10-16 12:13:14.0000000 +00:00</div>
<div class="t" style="left:464px;top:724.2px;font-size:12.3px;color:#000;font-family:'Liberation Sans';letter-spacing:0.1px">2024-10-16 12:14:00.0000000 +00:00</div>
<div class="t" style="left:688px;top:724.2px;font-size:12.3px;color:#000;font-family:'Liberation Sans';letter-spacing:0.2px">3</div>
<div class="t" style="left:771px;top:724.2px;font-size:12.3px;color:#000;font-family:'Liberation Sans';letter-spacing:0.2px">0</div>
<div class="t" style="left:833px;top:724.2px;font-size:12.3px;color:#000;font-family:'Liberation Sans';letter-spacing:0.2px">0</div>
<div class="t" style="left:927px;top:724.2px;font-size:12.3px;color:#000;font-family:'Liberation Sans';letter-spacing:0.2px">46</div>
<div class="t" style="left:1068px;top:724.2px;font-size:12.3px;color:#000;font-family:'Liberation Sans';letter-spacing:0.2px">sec</div>
<div class="t" style="left:1206px;top:724.2px;font-size:12.3px;color:#000;font-family:'Liberation Sans';letter-spacing:0.2px">46</div>
<div class="t" style="left:1342px;top:724.2px;font-size:12.3px;color:#000;font-family:'Liberation Sans';letter-spacing:0.2px">sec</div>
<div class="t" style="left:1475px;top:724.2px;font-size:12.3px;color:#000;font-family:'Liberation Sans';letter-spacing:0.2px">876.01</div>
<div class="t" style="left:1629px;top:724.2px;font-size:12.3px;color:#000;font-family:'Liberation Sans';letter-spacing:0.2px">kPa</div>
<div class="t" style="left:1781px;top:724.2px;font-size:12.3px;color:#000;font-family:'Liberation Sans';letter-spacing:0.2px">876.01</div>
<div class="a" style="left:0;top:759px;width:1829px;height:1px;background:#ececec"></div>
<div class="t" style="left:6px;top:744.9px;font-size:12.3px;color:#000;font-family:'Liberation Sans';letter-spacing:0.2px">37</div>
<div class="t" style="left:43px;top:744.2px;font-size:12.3px;color:#000;font-family:'Liberation Sans';letter-spacing:0.2px">37</div>
<div class="t" style="left:74px;top:744.2px;font-size:12.3px;color:#000;font-family:'Liberation Sans';letter-spacing:0.2px">TestTables</div>
<div class="t" style="left:164px;top:744.2px;font-size:12.3px;color:#000;font-family:'Liberation Sans';letter-spacing:0.2px">GF01</div>
<div class="t" style="left:240px;top:744.2px;font-size:12.3px;color:#000;font-family:'Liberation Sans';letter-spacing:0.1px">2024-10-16 12:14:00.0000000 +00:00</div>
<div class="t" style="left:464px;top:744.2px;font-size:12.3px;color:#000;font-family:'Liberation Sans';letter-spacing:0.1px">2024-10-16 12:15:00.0000000 +00:00</div>
<div class="t" style="left:688px;top:744.2px;font-size:12.3px;color:#000;font-family:'Liberation Sans';letter-spacing:0.2px">3</div>
<div class="t" style="left:771px;top:744.2px;font-size:12.3px;color:#000;font-family:'Liberation Sans';letter-spacing:0.2px">0</div>
<div class="t" style="left:833px;top:744.2px;font-size:12.3px;color:#000;font-family:'Liberation Sans';letter-spacing:0.2px">0</div>
<div class="t" style="left:927px;top:744.2px;font-size:12.3px;color:#000;font-family:'Liberation Sans';letter-spacing:0.2px">60</div>
<div class="t" style="left:1068px;top:744.2px;font-size:12.3px;color:#000;font-family:'Liberation Sans';letter-spacing:0.2px">sec</div>
<div class="t" style="left:1206px;top:744.2px;font-size:12.3px;color:#000;font-family:'Liberation Sans';letter-spacing:0.2px">60</div>
<div class="t" style="left:1342px;top:744.2px;font-size:12.3px;color:#000;font-family:'Liberation Sans';letter-spacing:0.2px">sec</div>
<div class="t" style="left:1475px;top:744.2px;font-size:12.3px;color:#000;font-family:'Liberation Sans';letter-spacing:0.2px">876.01</div>
<div class="t" style="left:1629px;top:744.2px;font-size:12.3px;color:#000;font-family:'Liberation Sans';letter-spacing:0.2px">kPa</div>
<div class="t" style="left:1781px;top:744.2px;font-size:12.3px;color:#000;font-family:'Liberation Sans';letter-spacing:0.2px">876.01</div>
<div class="a" style="left:0;top:779px;width:1829px;height:1px;background:#ececec"></div>
<div class="t" style="left:6px;top:764.9px;font-size:12.3px;color:#000;font-family:'Liberation Sans';letter-spacing:0.2px">38</div>
<div class="t" style="left:43px;top:764.2px;font-size:12.3px;color:#000;font-family:'Liberation Sans';letter-spacing:0.2px">38</div>
<div class="t" style="left:74px;top:764.2px;font-size:12.3px;color:#000;font-family:'Liberation Sans';letter-spacing:0.2px">TestTables</div>
<div class="t" style="left:164px;top:764.2px;font-size:12.3px;color:#000;font-family:'Liberation Sans';letter-spacing:0.2px">GF01</div>
<div class="t" style="left:240px;top:764.2px;font-size:12.3px;color:#000;font-family:'Liberation Sans';letter-spacing:0.1px">2024-10-16 12:15:00.0000000 +00:00</div>
<div class="t" style="left:464px;top:764.2px;font-size:12.3px;color:#000;font-family:'Liberation Sans';letter-spacing:0.1px">2024-10-16 12:16:00.0000000 +00:00</div>
<div class="t" style="left:688px;top:764.2px;font-size:12.3px;color:#000;font-family:'Liberation Sans';letter-spacing:0.2px">3</div>
<div class="t" style="left:771px;top:764.2px;font-size:12.3px;color:#000;font-family:'Liberation Sans';letter-spacing:0.2px">0</div>
<div class="t" style="left:833px;top:764.2px;font-size:12.3px;color:#000;font-family:'Liberation Sans';letter-spacing:0.2px">0</div>
<div class="t" style="left:927px;top:764.2px;font-size:12.3px;color:#000;font-family:'Liberation Sans';letter-spacing:0.2px">60</div>
<div class="t" style="left:1068px;top:764.2px;font-size:12.3px;color:#000;font-family:'Liberation Sans';letter-spacing:0.2px">sec</div>
<div class="t" style="left:1206px;top:764.2px;font-size:12.3px;color:#000;font-family:'Liberation Sans';letter-spacing:0.2px">60</div>
<div class="t" style="left:1342px;top:764.2px;font-size:12.3px;color:#000;font-family:'Liberation Sans';letter-spacing:0.2px">sec</div>
<div class="t" style="left:1475px;top:764.2px;font-size:12.3px;color:#000;font-family:'Liberation Sans';letter-spacing:0.2px">876.01</div>
<div class="t" style="left:1629px;top:764.2px;font-size:12.3px;color:#000;font-family:'Liberation Sans';letter-spacing:0.2px">kPa</div>
<div class="t" style="left:1781px;top:764.2px;font-size:12.3px;color:#000;font-family:'Liberation Sans';letter-spacing:0.2px">876.01</div>
<div class="a" style="left:0;top:799px;width:1829px;height:1px;background:#ececec"></div>
<div class="t" style="left:6px;top:784.9px;font-size:12.3px;color:#000;font-family:'Liberation Sans';letter-spacing:0.2px">39</div>
<div class="t" style="left:43px;top:784.2px;font-size:12.3px;color:#000;font-family:'Liberation Sans';letter-spacing:0.2px">39</div>
<div class="t" style="left:74px;top:784.2px;font-size:12.3px;color:#000;font-family:'Liberation Sans';letter-spacing:0.2px">TestTables</div>
<div class="t" style="left:164px;top:784.2px;font-size:12.3px;color:#000;font-family:'Liberation Sans';letter-spacing:0.2px">GF01</div>
<div class="t" style="left:240px;top:784.2px;font-size:12.3px;color:#000;font-family:'Liberation Sans';letter-spacing:0.1px">2024-10-16 12:16:00.0000000 +00:00</div>
<div class="t" style="left:464px;top:784.2px;font-size:12.3px;color:#000;font-family:'Liberation Sans';letter-spacing:0.1px">2024-10-16 12:17:00.0000000 +00:00</div>
<div class="t" style="left:688px;top:784.2px;font-size:12.3px;color:#000;font-family:'Liberation Sans';letter-spacing:0.2px">3</div>
<div class="t" style="left:771px;top:784.2px;font-size:12.3px;color:#000;font-family:'Liberation Sans';letter-spacing:0.2px">0</div>
<div class="t" style="left:833px;top:784.2px;font-size:12.3px;color:#000;font-family:'Liberation Sans';letter-spacing:0.2px">0</div>
<div class="t" style="left:927px;top:784.2px;font-size:12.3px;color:#000;font-family:'Liberation Sans';letter-spacing:0.2px">60</div>
<div class="t" style="left:1068px;top:784.2px;font-size:12.3px;color:#000;font-family:'Liberation Sans';letter-spacing:0.2px">sec</div>
<div class="t" style="left:1206px;top:784.2px;font-size:12.3px;color:#000;font-family:'Liberation Sans';letter-spacing:0.2px">60</div>
<div class="t" style="left:1342px;top:784.2px;font-size:12.3px;color:#000;font-family:'Liberation Sans';letter-spacing:0.2px">sec</div>
<div class="t" style="left:1475px;top:784.2px;font-size:12.3px;color:#000;font-family:'Liberation Sans';letter-spacing:0.2px">876.01</div>
<div class="t" style="left:1629px;top:784.2px;font-size:12.3px;color:#000;font-family:'Liberation Sans';letter-spacing:0.2px">kPa</div>
<div class="t" style="left:1781px;top:784.2px;font-size:12.3px;color:#000;font-family:'Liberation Sans';letter-spacing:0.2px">876.01</div>
<div class="a" style="left:0;top:819px;width:1829px;height:1px;background:#ececec"></div>
<div class="t" style="left:6px;top:804.9px;font-size:12.3px;color:#000;font-family:'Liberation Sans';letter-spacing:0.2px">40</div>
<div class="t" style="left:43px;top:804.2px;font-size:12.3px;color:#000;font-family:'Liberation Sans';letter-spacing:0.2px">40</div>
<div class="t" style="left:74px;top:804.2px;font-size:12.3px;color:#000;font-family:'Liberation Sans';letter-spacing:0.2px">TestTables</div>
<div class="t" style="left:164px;top:804.2px;font-size:12.3px;color:#000;font-family:'Liberation Sans';letter-spacing:0.2px">GF01</div>
<div class="t" style="left:240px;top:804.2px;font-size:12.3px;color:#000;font-family:'Liberation Sans';letter-spacing:0.1px">2024-10-16 12:17:00.0000000 +00:00</div>
<div class="t" style="left:464px;top:804.2px;font-size:12.3px;color:#000;font-family:'Liberation Sans';letter-spacing:0.1px">2024-10-16 12:18:00.0000000 +00:00</div>
<div class="t" style="left:688px;top:804.2px;font-size:12.3px;color:#000;font-family:'Liberation Sans';letter-spacing:0.2px">3</div>
<div class="t" style="left:771px;top:804.2px;font-size:12.3px;color:#000;font-family:'Liberation Sans';letter-spacing:0.2px">0</div>
<div class="t" style="left:833px;top:804.2px;font-size:12.3px;color:#000;font-family:'Liberation Sans';letter-spacing:0.2px">0</div>
<div class="t" style="left:927px;top:804.2px;font-size:12.3px;color:#000;font-family:'Liberation Sans';letter-spacing:0.2px">60</div>
<div class="t" style="left:1068px;top:804.2px;font-size:12.3px;color:#000;font-family:'Liberation Sans';letter-spacing:0.2px">sec</div>
<div class="t" style="left:1206px;top:804.2px;font-size:12.3px;color:#000;font-family:'Liberation Sans';letter-spacing:0.2px">60</div>
<div class="t" style="left:1342px;top:804.2px;font-size:12.3px;color:#000;font-family:'Liberation Sans';letter-spacing:0.2px">sec</div>
<div class="t" style="left:1475px;top:804.2px;font-size:12.3px;color:#000;font-family:'Liberation Sans';letter-spacing:0.2px">876.01</div>
<div class="t" style="left:1629px;top:804.2px;font-size:12.3px;color:#000;font-family:'Liberation Sans';letter-spacing:0.2px">kPa</div>
<div class="t" style="left:1781px;top:804.2px;font-size:12.3px;color:#000;font-family:'Liberation Sans';letter-spacing:0.2px">876.01</div>
<div class="a" style="left:0;top:839px;width:1829px;height:1px;background:#ececec"></div>
<div class="t" style="left:6px;top:824.9px;font-size:12.3px;color:#000;font-family:'Liberation Sans';letter-spacing:0.2px">41</div>
<div class="t" style="left:43px;top:824.2px;font-size:12.3px;color:#000;font-family:'Liberation Sans';letter-spacing:0.2px">41</div>
<div class="t" style="left:74px;top:824.2px;font-size:12.3px;color:#000;font-family:'Liberation Sans';letter-spacing:0.2px">TestTables</div>
<div class="t" style="left:164px;top:824.2px;font-size:12.3px;color:#000;font-family:'Liberation Sans';letter-spacing:0.2px">GF01</div>
<div class="t" style="left:240px;top:824.2px;font-size:12.3px;color:#000;font-family:'Liberation Sans';letter-spacing:0.1px">2024-10-16 12:18:00.0000000 +00:00</div>
<div class="t" style="left:464px;top:824.2px;font-size:12.3px;color:#000;font-family:'Liberation Sans';letter-spacing:0.1px">2024-10-16 12:19:00.0000000 +00:00</div>
<div class="t" style="left:688px;top:824.2px;font-size:12.3px;color:#000;font-family:'Liberation Sans';letter-spacing:0.2px">3</div>
<div class="t" style="left:771px;top:824.2px;font-size:12.3px;color:#000;font-family:'Liberation Sans';letter-spacing:0.2px">0</div>
<div class="t" style="left:833px;top:824.2px;font-size:12.3px;color:#000;font-family:'Liberation Sans';letter-spacing:0.2px">0</div>
<div class="t" style="left:927px;top:824.2px;font-size:12.3px;color:#000;font-family:'Liberation Sans';letter-spacing:0.2px">60</div>
<div class="t" style="left:1068px;top:824.2px;font-size:12.3px;color:#000;font-family:'Liberation Sans';letter-spacing:0.2px">sec</div>
<div class="t" style="left:1206px;top:824.2px;font-size:12.3px;color:#000;font-family:'Liberation Sans';letter-spacing:0.2px">60</div>
<div class="t" style="left:1342px;top:824.2px;font-size:12.3px;color:#000;font-family:'Liberation Sans';letter-spacing:0.2px">sec</div>
<div class="t" style="left:1475px;top:824.2px;font-size:12.3px;color:#000;font-family:'Liberation Sans';letter-spacing:0.2px">876.01</div>
<div class="t" style="left:1629px;top:824.2px;font-size:12.3px;color:#000;font-family:'Liberation Sans';letter-spacing:0.2px">kPa</div>
<div class="t" style="left:1781px;top:824.2px;font-size:12.3px;color:#000;font-family:'Liberation Sans';letter-spacing:0.2px">876.01</div>
<div class="a" style="left:0;top:859px;width:1829px;height:1px;background:#ececec"></div>
<div class="t" style="left:6px;top:844.9px;font-size:12.3px;color:#000;font-family:'Liberation Sans';letter-spacing:0.2px">42</div>
<div class="t" style="left:43px;top:844.2px;font-size:12.3px;color:#000;font-family:'Liberation Sans';letter-spacing:0.2px">42</div>
<div class="t" style="left:74px;top:844.2px;font-size:12.3px;color:#000;font-family:'Liberation Sans';letter-spacing:0.2px">TestTables</div>
<div class="t" style="left:164px;top:844.2px;font-size:12.3px;color:#000;font-family:'Liberation Sans';letter-spacing:0.2px">GF01</div>
<div class="t" style="left:240px;top:844.2px;font-size:12.3px;color:#000;font-family:'Liberation Sans';letter-spacing:0.1px">2024-10-16 12:19:00.0000000 +00:00</div>
<div class="t" style="left:464px;top:844.2px;font-size:12.3px;color:#000;font-family:'Liberation Sans';letter-spacing:0.1px">2024-10-16 12:20:00.0000000 +00:00</div>
<div class="t" style="left:688px;top:844.2px;font-size:12.3px;color:#000;font-family:'Liberation Sans';letter-spacing:0.2px">3</div>
<div class="t" style="left:771px;top:844.2px;font-size:12.3px;color:#000;font-family:'Liberation Sans';letter-spacing:0.2px">0</div>
<div class="t" style="left:833px;top:844.2px;font-size:12.3px;color:#000;font-family:'Liberation Sans';letter-spacing:0.2px">0</div>
<div class="t" style="left:927px;top:844.2px;font-size:12.3px;color:#000;font-family:'Liberation Sans';letter-spacing:0.2px">60</div>
<div class="t" style="left:1068px;top:844.2px;font-size:12.3px;color:#000;font-family:'Liberation Sans';letter-spacing:0.2px">sec</div>
<div class="t" style="left:1206px;top:844.2px;font-size:12.3px;color:#000;font-family:'Liberation Sans';letter-spacing:0.2px">60</div>
<div class="t" style="left:1342px;top:844.2px;font-size:12.3px;color:#000;font-family:'Liberation Sans';letter-spacing:0.2px">sec</div>
<div class="t" style="left:1475px;top:844.2px;font-size:12.3px;color:#000;font-family:'Liberation Sans';letter-spacing:0.2px">876.01</div>
<div class="t" style="left:1629px;top:844.2px;font-size:12.3px;color:#000;font-family:'Liberation Sans';letter-spacing:0.2px">kPa</div>
<div class="t" style="left:1781px;top:844.2px;font-size:12.3px;color:#000;font-family:'Liberation Sans';letter-spacing:0.2px">876.01</div>
</div>
<div class="a" style="left:2189px;top:365px;width:22px;height:863px;background:#f0f0f0;"></div>
<svg class="a" style="left:2193px;top:371px" width="13" height="8"><path d="M1 7 L6.5 1.5 L12 7" stroke="#606060" stroke-width="1.6" fill="none"/></svg>
<div class="a" style="left:2190px;top:385px;width:20px;height:185px;background:#cdcdcd;"></div>
<svg class="a" style="left:2193px;top:1212px" width="13" height="8"><path d="M1 1 L6.5 6.5 L12 1" stroke="#606060" stroke-width="1.6" fill="none"/></svg>
<div class="a" style="left:360px;top:1228px;width:1851px;height:22px;background:#f0f0f0;border-bottom:1px solid #a0a0a0"></div>
<div class="a" style="left:381px;top:1229px;width:277px;height:19px;background:#cdcdcd;"></div>
<svg class="a" style="left:366px;top:1232px" width="8" height="12"><path d="M6.5 1 L1.5 6 L6.5 11" stroke="#606060" stroke-width="1.6" fill="none"/></svg>
<svg class="a" style="left:2176px;top:1232px" width="8" height="12"><path d="M1.5 1 L6.5 6 L1.5 11" stroke="#606060" stroke-width="1.6" fill="none"/></svg>
<div class="a" style="left:354px;top:1252px;width:1857px;height:1px;background:#c8c8c8;"></div>
<div class="a" style="left:354px;top:335px;width:1px;height:941px;background:#94a3c9;"></div>
<div class="a" style="left:354px;top:1255px;width:1857px;height:21px;background:#f0e68c;"></div>
<svg class="a" style="left:358px;top:1259px" width="16" height="16"><circle cx="8" cy="8" r="7.5" fill="#fff"/><circle cx="8" cy="8" r="6.6" fill="#2f9a32"/><path d="M4.3 8.3 L7 11 L11.7 4.6" stroke="#fff" stroke-width="2" fill="none"/></svg>
<div class="t" style="left:378px;top:1261px;font-size:14.7px;color:#1e1e1e;font-family:'Liberation Sans';">Query executed successfully.</div>
<div class="a" style="left:1651px;top:1259px;width:1px;height:15px;background:#a09a6a;"></div>
<div class="a" style="left:1867px;top:1259px;width:1px;height:15px;background:#a09a6a;"></div>
<div class="a" style="left:1942px;top:1259px;width:1px;height:15px;background:#a09a6a;"></div>
<div class="a" style="left:2056px;top:1259px;width:1px;height:15px;background:#a09a6a;"></div>
<div class="a" style="left:2125px;top:1259px;width:1px;height:15px;background:#a09a6a;"></div>
<svg class="a" style="left:1656px;top:1258px" width="14" height="16"><path d="M3.5 7 V4.5 A3.5 3.5 0 0 1 10.5 4.5 V7" stroke="#1e1e1e" stroke-width="1.8" fill="none"/><rect x="1" y="7" width="12" height="8.5" rx="1" fill="#1e1e1e"/><rect x="6" y="10" width="2" height="3" fill="#f0e68c"/></svg>
<div class="t" style="left:1677px;top:1261px;font-size:14.5px;color:#1e1e1e;font-family:'Liberation Sans';">reverity-fctest.database.wi...</div>
<div class="t" style="left:1874px;top:1261px;font-size:14.5px;color:#1e1e1e;font-family:'Liberation Sans';">adm (51)</div>
<div class="t" style="left:1949px;top:1261px;font-size:14.5px;color:#1e1e1e;font-family:'Liberation Sans';">flowcomputers</div>
<div class="t" style="left:2063px;top:1261px;font-size:14.5px;color:#1e1e1e;font-family:'Liberation Sans';">00:00:00</div>
<div class="t" style="left:2132px;top:1261px;font-size:14.5px;color:#1e1e1e;font-family:'Liberation Sans';">185 rows</div>
<div class="t" style="left:1841.5px;top:1195px;font-size:24.6px;color:rgba(125,125,125,0.5);font-family:'Liberation Sans';">Activate Windows</div>
<div class="t" style="left:1841px;top:1227px;font-size:18px;color:rgba(125,125,125,0.5);font-family:'Liberation Sans';">Go to Settings to activate Windows.</div></body></html>
